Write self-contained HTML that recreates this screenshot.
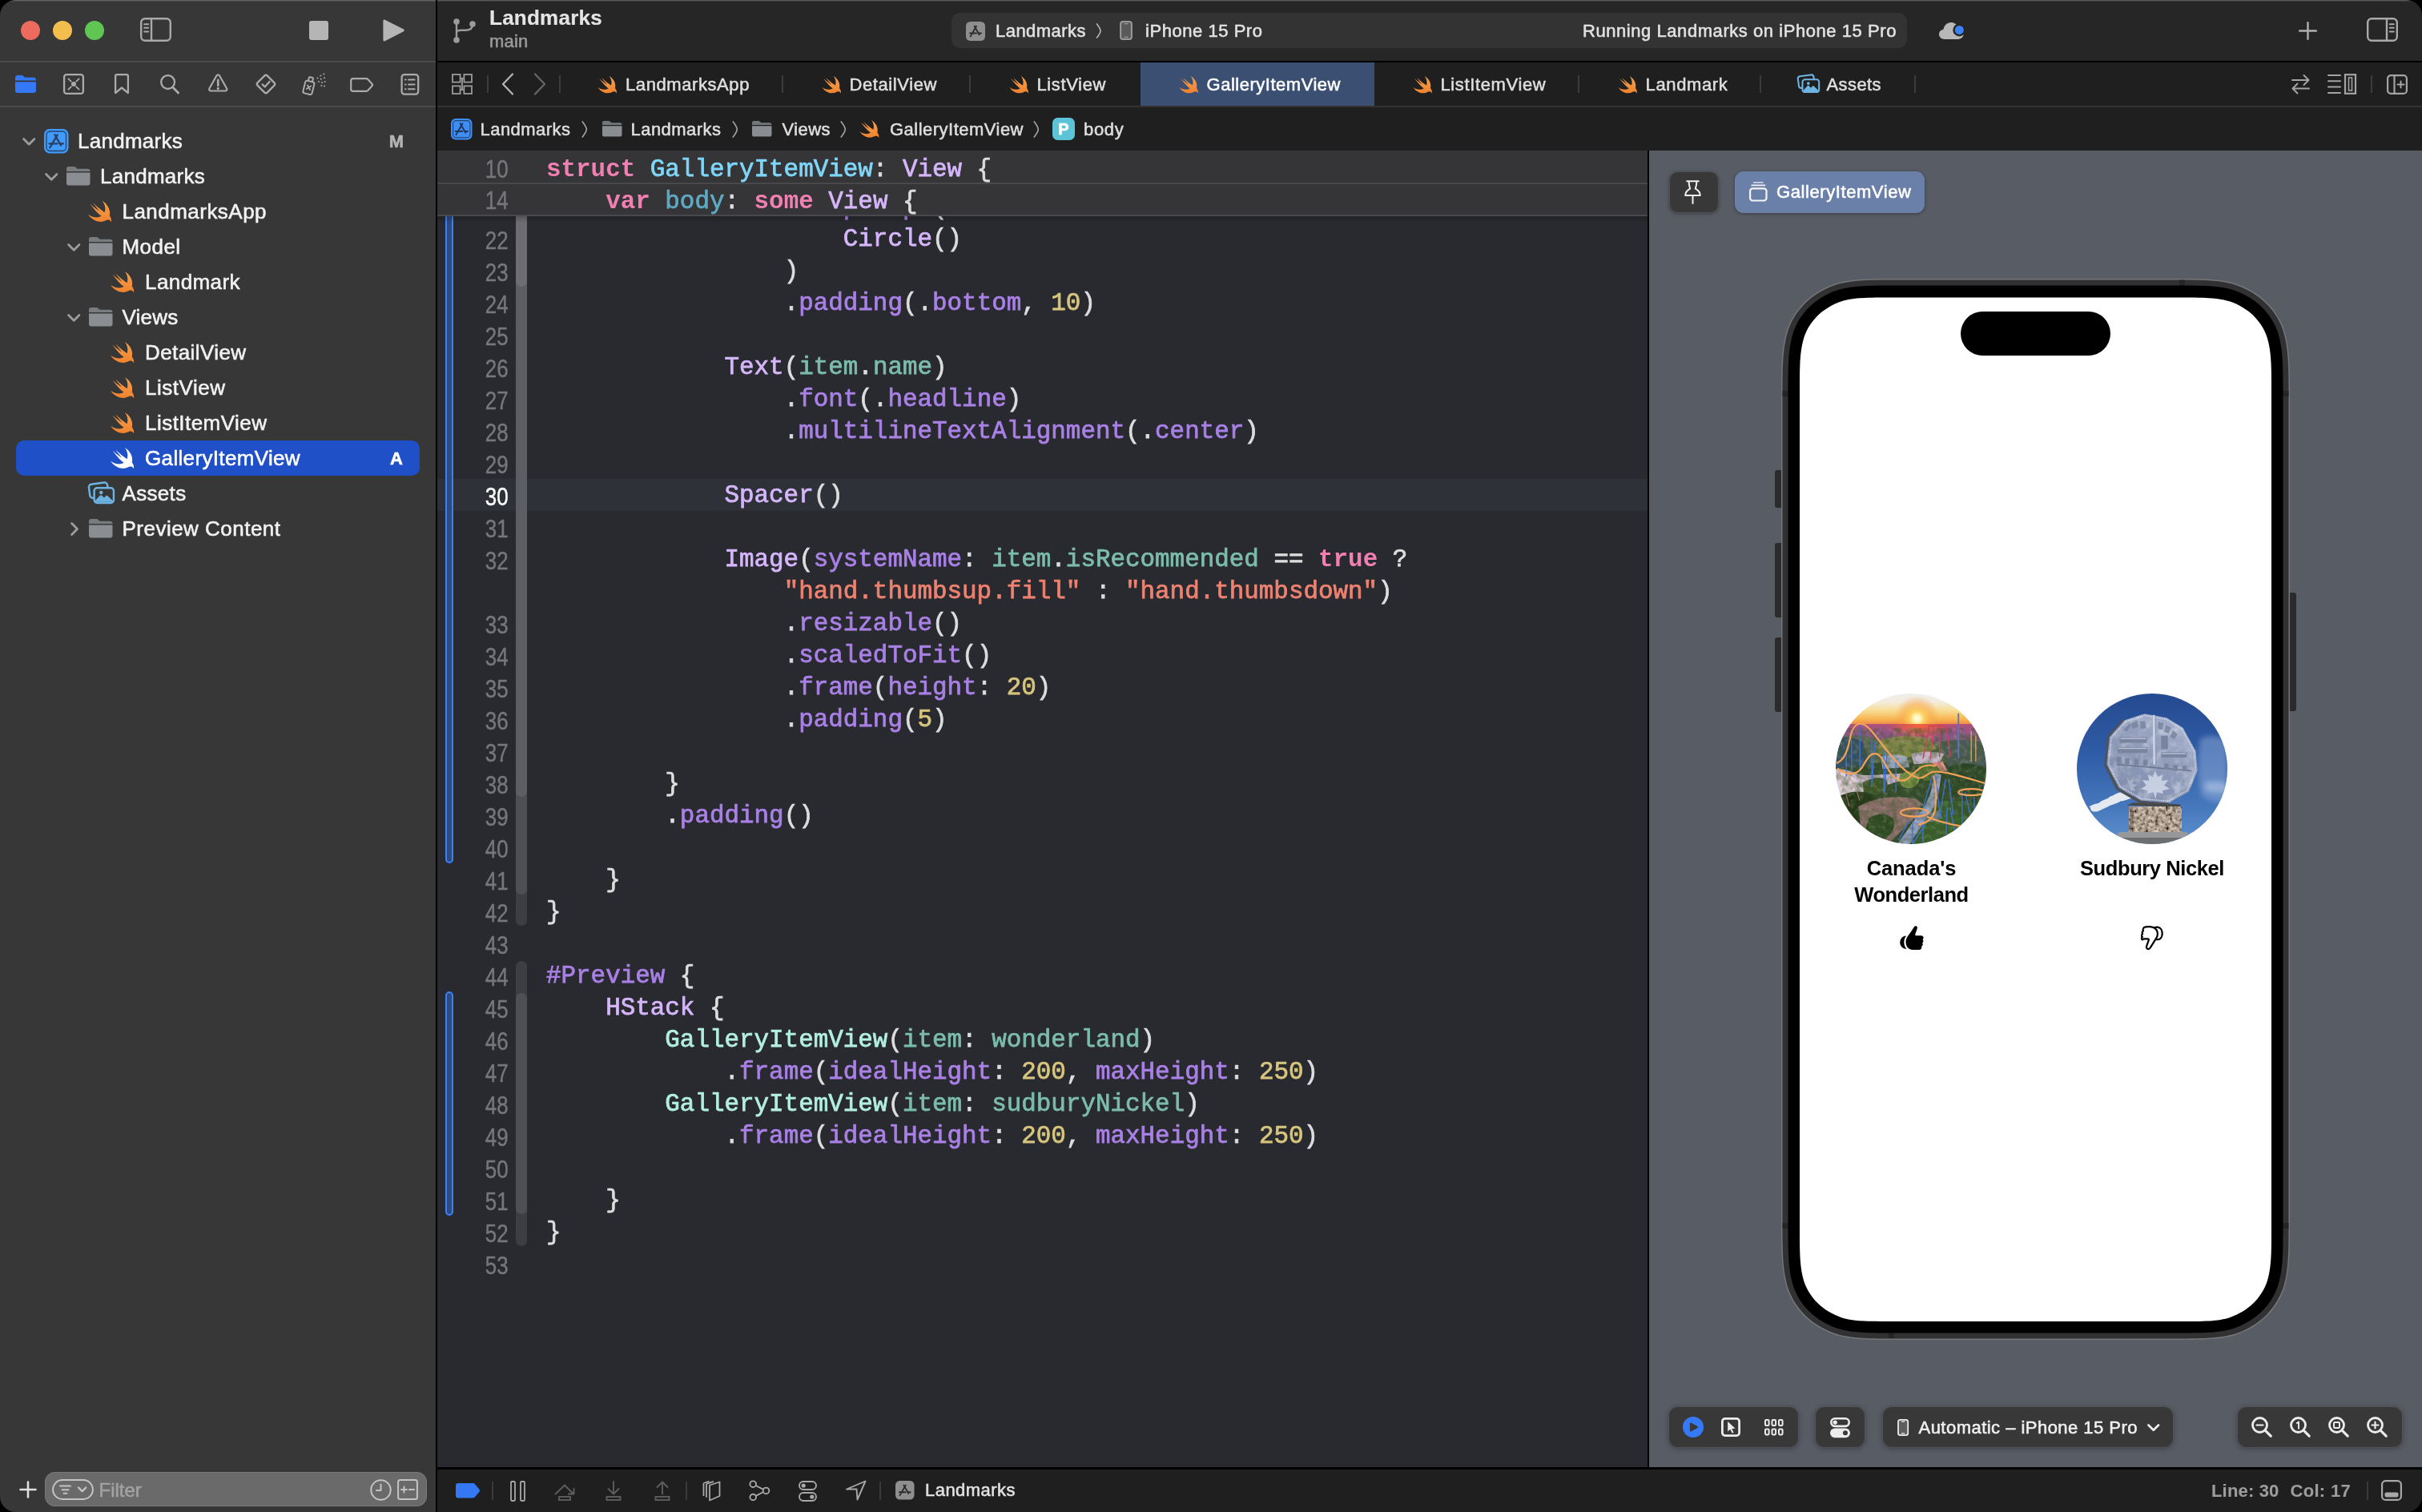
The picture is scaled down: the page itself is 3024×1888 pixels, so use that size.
<!DOCTYPE html>
<html lang="en"><head><meta charset="utf-8"><title>Landmarks — GalleryItemView.swift</title>
<style>
html,body{margin:0;padding:0;background:#000;}
body{width:3024px;height:1888px;overflow:hidden;position:relative;font-family:"Liberation Sans", sans-serif;}
#win{position:absolute;left:0;top:0;width:3024px;height:1888px;border-radius:20px;overflow:hidden;background:#1f1f1f;will-change:transform;}
#win div,#win svg,#win span.t{position:absolute;}
#win svg{overflow:visible;display:block;}
.t{white-space:pre;font-family:"Liberation Sans", sans-serif;-webkit-text-stroke:.55px currentColor;}
.cl{position:absolute;white-space:pre;font-family:"Liberation Mono", monospace;font-size:30.9px;line-height:40px;height:40px;letter-spacing:0;-webkit-text-stroke:.75px currentColor;}.ck{color:#f07fb2;font-weight:700;-webkit-text-stroke:0;}.cd{color:#7fd6f8;}.ct{color:#d5b6fb;}.cm{color:#a980e6;}.cp{color:#7cbcab;}.cP{color:#b2efdf;}.cs{color:#ee8271;}.cn{color:#d6c57d;}.cb{color:#5ea9c3;}.cx{color:#dddddd;}.ln{position:absolute;right:2389px;font-family:"Liberation Sans", sans-serif;font-size:32px;line-height:40px;height:40px;transform:scaleX(.81);-webkit-text-stroke:.45px currentColor;transform-origin:100% 50%;}</style></head>
<body>
<svg width="0" height="0" style="position:absolute"><defs><linearGradient id="swg" x1="0" y1="0" x2="0" y2="1"><stop offset="0" stop-color="#f9a04a"/><stop offset="1" stop-color="#f0832f"/></linearGradient></defs></svg>
<div id="win">
<div style="left:0px;top:0px;width:544px;height:1888px;background:#373737;"></div>
<div style="left:0px;top:0px;width:544px;height:1px;background:#646464;"></div>
<div style="left:0px;top:1px;width:544px;height:1px;background:#484848;"></div>
<div style="left:26px;top:26px;width:24px;height:24px;background:#ed6a5e;border-radius:50%;"></div>
<div style="left:66px;top:26px;width:24px;height:24px;background:#f4be4f;border-radius:50%;"></div>
<div style="left:106px;top:26px;width:24px;height:24px;background:#61c554;border-radius:50%;"></div>
<svg style="left:175px;top:22px;" width="39" height="30" viewBox="0 0 39 30" ><rect x="1.200" y="1.200" width="36.600" height="27.600" rx="5" fill="none" stroke="#a9a9a9" stroke-width="2.4"/><path d="M14 1.500v27" stroke="#a9a9a9" stroke-width="2.4"/><path d="M5.200 8.200h5M5.200 12.800h5M5.200 17.400h5" stroke="#a9a9a9" stroke-width="2" stroke-linecap="round"/></svg>
<div style="left:386px;top:26px;width:24px;height:24px;background:#b5b5b5;border-radius:3px;"></div>
<svg style="left:478px;top:23px;" width="28" height="30" viewBox="0 0 28 30" ><path d="M2.600 1.800c-1-.6-2.200.1-2.200 1.300v23.800c0 1.200 1.200 1.900 2.200 1.300l23.400-11.900c1.100-.6 1.100-2.100 0-2.700z" fill="#b5b5b5"/></svg>
<div style="left:0px;top:76px;width:544px;height:2px;background:#4a4a4a;"></div>
<div style="left:0px;top:132px;width:544px;height:2px;background:#4a4a4a;"></div>
<svg style="left:19px;top:94px;" width="26" height="22" viewBox="0 0 26 22" ><path d="M0 3.2C0 1.4 1.3 0 3 0h5.2c.8 0 1.5.3 2 .9l1 1.1c.4.5 1 .7 1.6.7H23c1.7 0 3 1.3 3 3v.8H0z" fill="#3478f6"/><path d="M0 8.2h26V19c0 1.7-1.3 3-3 3H3c-1.7 0-3-1.3-3-3z" fill="#3478f6"/></svg>
<svg style="left:79px;top:92px;" width="26" height="26" viewBox="0 0 26 26" ><rect x="1.1" y="1.1" width="23.8" height="23.8" rx="3" fill="none" stroke="#ababab" stroke-width="2.3"/><path d="M6.4 6.4l3.300 3.300M19.600 6.400l-3.300 3.300M6.400 19.600l3.300-3.300M19.600 19.600l-3.300-3.300" stroke="#ababab" stroke-width="1.900" stroke-linecap="round"/><circle cx="13" cy="13" r="3" fill="#ababab"/></svg>
<svg style="left:142px;top:92px;" width="20" height="26" viewBox="0 0 20 26" ><path d="M2.1 3.1c0-1.1.9-2 2-2h11.8c1.1 0 2 .9 2 2v21l-7.9-6.6-7.9 6.6z" fill="none" stroke="#ababab" stroke-width="2.3" stroke-linejoin="round"/></svg>
<svg style="left:200px;top:93px;" width="24" height="25" viewBox="0 0 24 25" ><circle cx="9.6" cy="9.6" r="8.4" fill="none" stroke="#ababab" stroke-width="2.3"/><path d="M15.8 16l6.8 7" stroke="#ababab" stroke-width="2.8" stroke-linecap="round"/></svg>
<svg style="left:260px;top:92px;" width="24.5" height="23.6" viewBox="0 0 26 25" ><path d="M11.2 2.4c.8-1.4 2.8-1.4 3.6 0l9.7 17.3c.8 1.4-.2 3.1-1.8 3.1H3.3c-1.6 0-2.6-1.7-1.8-3.1z" fill="none" stroke="#ababab" stroke-width="2.3" stroke-linejoin="round"/><path d="M13 8.400v7.400" stroke="#ababab" stroke-width="2.900" stroke-linecap="round"/><circle cx="13" cy="19.500" r="1.700" fill="#ababab"/></svg>
<svg style="left:318px;top:91px;" width="28" height="28" viewBox="0 0 28 28" ><rect x="5.4" y="5.4" width="17.2" height="17.2" rx="2.6" transform="rotate(45 14 14)" fill="none" stroke="#ababab" stroke-width="2.3"/><path d="M9.6 14.4l3.1 3.1 5.8-6.6" fill="none" stroke="#ababab" stroke-width="2.3" stroke-linecap="round" stroke-linejoin="round"/></svg>
<svg style="left:377px;top:91px;" width="31" height="28" viewBox="0 0 31 28" ><g transform="rotate(14 9 17)"><rect x="3" y="10.5" width="11.5" height="16" rx="2.4" fill="none" stroke="#ababab" stroke-width="2"/><path d="M6.2 10.2V6.4c0-.6.4-1 1-1h3.2c.6 0 1 .4 1 1v3.8" fill="none" stroke="#ababab" stroke-width="2"/><path d="M6.6 16l4.4 4.6M11 16l-4.4 4.6" stroke="#ababab" stroke-width="1.8" stroke-linecap="round"/></g><g fill="#ababab"><circle cx="19.5" cy="6.4" r="1"/><circle cx="23.4" cy="3.6" r="1"/><circle cx="27.4" cy="1.6" r="1"/><circle cx="23.8" cy="7.8" r="1"/><circle cx="28" cy="6.2" r="1"/><circle cx="21" cy="11" r="1"/><circle cx="25" cy="12" r="1"/><circle cx="28.6" cy="11" r="1"/><circle cx="24.4" cy="16" r="1"/><circle cx="28" cy="16.4" r="1"/></g></svg>
<svg style="left:436.5px;top:96.5px;" width="30.5" height="18" viewBox="0 0 32 19" ><path d="M4 1.2h17.4c.9 0 1.7.4 2.3 1.1l5.4 6.1c.6.6.6 1.6 0 2.2l-5.4 6.1c-.6.7-1.4 1.1-2.3 1.1H4c-1.6 0-2.8-1.300-2.8-2.800V4C1.200 2.400 2.400 1.200 4 1.200z" fill="none" stroke="#ababab" stroke-width="2.3" stroke-linejoin="round"/></svg>
<svg style="left:500px;top:92px;" width="24" height="27" viewBox="0 0 24 27" ><rect x="1.6" y="1.1" width="20.6" height="24.6" rx="3.4" fill="none" stroke="#ababab" stroke-width="2.3"/><g stroke="#ababab" stroke-width="2" stroke-linecap="round"><path d="M10 7.600h7.600M10 13.400h7.600M10 19.200h7.600"/><path d="M6 7.600h.6M6 13.400h.6M6 19.200h.6"/></g></svg>
<svg style="left:28px;top:171.5px;" width="16.5" height="9.9" viewBox="0 0 16 9.6" ><path d="M1.5 1.5L8 8l6.5-6.5" fill="none" stroke="#9c9c9c" stroke-width="2.7" stroke-linecap="round" stroke-linejoin="round"/></svg>
<svg style="left:54.5px;top:161px;" width="30.5" height="30.5" viewBox="0 0 30.500 30.500" ><rect x="0" y="0" width="30.500" height="30.500" rx="7" fill="#3f9bfd"/><rect x="3" y="3" width="24.500" height="24.500" rx="4.500" fill="none" stroke="#27426b" stroke-width="1.300"/><g fill="none" stroke="#2b3f60" stroke-width="2.300" stroke-linecap="round"><path d="M16.600 7.400L8.800 20.800"/><path d="M13.400 7.200l7.600 13.200"/><path d="M6.600 18.400h10"/><path d="M20.400 18.400h3.600"/><path d="M8 22.200l-.6 1"/></g></svg>
<span class="t" style="top:159.0px;font-size:26px;line-height:34px;color:#f2f2f2;left:97px;letter-spacing:0.264px;">Landmarks</span>
<span class="t" style="top:161.5px;font-size:22px;line-height:29px;color:#b4b4b4;left:-5px;width:1000px;text-align:center;font-weight:700;">M</span>
<svg style="left:56px;top:215.5px;" width="16.5" height="9.9" viewBox="0 0 16 9.6" ><path d="M1.5 1.5L8 8l6.5-6.5" fill="none" stroke="#9c9c9c" stroke-width="2.7" stroke-linecap="round" stroke-linejoin="round"/></svg>
<svg style="left:83px;top:208px;" width="29.5" height="23.6" viewBox="0 0 30 24" ><path d="M2.5 0h7.2c.9 0 1.6.3 2.2.9l1.3 1.3c.5.5 1.1.7 1.8.7H27c1.7 0 3 1.3 3 3V6H0V2.5C0 1.1 1.1 0 2.5 0z" fill="#8a8d91" opacity=".8"/><path d="M0 7.6h30V21c0 1.7-1.3 3-3 3H3c-1.7 0-3-1.3-3-3z" fill="#8a8d91"/></svg>
<span class="t" style="top:203.0px;font-size:26px;line-height:34px;color:#f2f2f2;left:125px;letter-spacing:0.264px;">Landmarks</span>
<svg style="left:109.5px;top:250.5px;" width="29.8" height="26.6" viewBox="2.35 3.35 18.6 16.6" ><path d="M13.543 3.41c4.114 2.47 6.545 7.162 5.549 11.131-.024.093-.05.181-.076.272l.002.001c2.062 2.538 1.5 5.258 1.236 4.745-1.072-2.086-3.066-1.568-4.088-1.043a6.803 6.803 0 0 1-.281.158l-.02.012-.002.002c-2.115 1.123-4.957 1.205-7.812-.022a12.568 12.568 0 0 1-5.64-4.838c.649.48 1.35.902 2.097 1.252 3.019 1.414 6.051 1.311 8.197-.002C9.651 12.73 7.101 9.67 5.146 7.191a10.628 10.628 0 0 1-1.005-1.384c2.34 2.142 6.038 4.83 7.365 5.576C8.69 8.408 6.208 4.743 6.324 4.86c4.436 4.47 8.528 6.996 8.528 6.996.154.085.27.154.36.213.085-.215.16-.437.224-.668.708-2.588-.09-5.548-1.893-7.992z" fill="url(#swg)"/></svg>
<span class="t" style="top:247.0px;font-size:26px;line-height:34px;color:#f2f2f2;left:152.5px;letter-spacing:0.467px;">LandmarksApp</span>
<svg style="left:83.5px;top:303.5px;" width="16.5" height="9.9" viewBox="0 0 16 9.6" ><path d="M1.5 1.5L8 8l6.5-6.5" fill="none" stroke="#9c9c9c" stroke-width="2.7" stroke-linecap="round" stroke-linejoin="round"/></svg>
<svg style="left:110.5px;top:296px;" width="29.5" height="23.6" viewBox="0 0 30 24" ><path d="M2.5 0h7.2c.9 0 1.6.3 2.2.9l1.3 1.3c.5.5 1.1.7 1.8.7H27c1.7 0 3 1.3 3 3V6H0V2.5C0 1.1 1.1 0 2.5 0z" fill="#8a8d91" opacity=".8"/><path d="M0 7.6h30V21c0 1.7-1.3 3-3 3H3c-1.7 0-3-1.3-3-3z" fill="#8a8d91"/></svg>
<span class="t" style="top:291.0px;font-size:26px;line-height:34px;color:#f2f2f2;left:152.5px;letter-spacing:0.434px;">Model</span>
<svg style="left:138px;top:338.5px;" width="29.8" height="26.6" viewBox="2.35 3.35 18.6 16.6" ><path d="M13.543 3.41c4.114 2.47 6.545 7.162 5.549 11.131-.024.093-.05.181-.076.272l.002.001c2.062 2.538 1.5 5.258 1.236 4.745-1.072-2.086-3.066-1.568-4.088-1.043a6.803 6.803 0 0 1-.281.158l-.02.012-.002.002c-2.115 1.123-4.957 1.205-7.812-.022a12.568 12.568 0 0 1-5.64-4.838c.649.48 1.35.902 2.097 1.252 3.019 1.414 6.051 1.311 8.197-.002C9.651 12.73 7.101 9.67 5.146 7.191a10.628 10.628 0 0 1-1.005-1.384c2.34 2.142 6.038 4.83 7.365 5.576C8.69 8.408 6.208 4.743 6.324 4.86c4.436 4.47 8.528 6.996 8.528 6.996.154.085.27.154.36.213.085-.215.16-.437.224-.668.708-2.588-.09-5.548-1.893-7.992z" fill="url(#swg)"/></svg>
<span class="t" style="top:335.0px;font-size:26px;line-height:34px;color:#f2f2f2;left:181px;letter-spacing:0.422px;">Landmark</span>
<svg style="left:83.5px;top:391.5px;" width="16.5" height="9.9" viewBox="0 0 16 9.6" ><path d="M1.5 1.5L8 8l6.5-6.5" fill="none" stroke="#9c9c9c" stroke-width="2.7" stroke-linecap="round" stroke-linejoin="round"/></svg>
<svg style="left:110.5px;top:384px;" width="29.5" height="23.6" viewBox="0 0 30 24" ><path d="M2.5 0h7.2c.9 0 1.6.3 2.2.9l1.3 1.3c.5.5 1.1.7 1.8.7H27c1.7 0 3 1.3 3 3V6H0V2.5C0 1.1 1.1 0 2.5 0z" fill="#8a8d91" opacity=".8"/><path d="M0 7.6h30V21c0 1.7-1.3 3-3 3H3c-1.7 0-3-1.3-3-3z" fill="#8a8d91"/></svg>
<span class="t" style="top:379.0px;font-size:26px;line-height:34px;color:#f2f2f2;left:152.5px;letter-spacing:0.222px;">Views</span>
<svg style="left:138px;top:426.5px;" width="29.8" height="26.6" viewBox="2.35 3.35 18.6 16.6" ><path d="M13.543 3.41c4.114 2.47 6.545 7.162 5.549 11.131-.024.093-.05.181-.076.272l.002.001c2.062 2.538 1.5 5.258 1.236 4.745-1.072-2.086-3.066-1.568-4.088-1.043a6.803 6.803 0 0 1-.281.158l-.02.012-.002.002c-2.115 1.123-4.957 1.205-7.812-.022a12.568 12.568 0 0 1-5.64-4.838c.649.48 1.35.902 2.097 1.252 3.019 1.414 6.051 1.311 8.197-.002C9.651 12.73 7.101 9.67 5.146 7.191a10.628 10.628 0 0 1-1.005-1.384c2.34 2.142 6.038 4.83 7.365 5.576C8.69 8.408 6.208 4.743 6.324 4.86c4.436 4.47 8.528 6.996 8.528 6.996.154.085.27.154.36.213.085-.215.16-.437.224-.668.708-2.588-.09-5.548-1.893-7.992z" fill="url(#swg)"/></svg>
<span class="t" style="top:423.0px;font-size:26px;line-height:34px;color:#f2f2f2;left:181px;letter-spacing:0.414px;">DetailView</span>
<svg style="left:138px;top:470.5px;" width="29.8" height="26.6" viewBox="2.35 3.35 18.6 16.6" ><path d="M13.543 3.41c4.114 2.47 6.545 7.162 5.549 11.131-.024.093-.05.181-.076.272l.002.001c2.062 2.538 1.5 5.258 1.236 4.745-1.072-2.086-3.066-1.568-4.088-1.043a6.803 6.803 0 0 1-.281.158l-.02.012-.002.002c-2.115 1.123-4.957 1.205-7.812-.022a12.568 12.568 0 0 1-5.64-4.838c.649.48 1.35.902 2.097 1.252 3.019 1.414 6.051 1.311 8.197-.002C9.651 12.73 7.101 9.67 5.146 7.191a10.628 10.628 0 0 1-1.005-1.384c2.34 2.142 6.038 4.83 7.365 5.576C8.69 8.408 6.208 4.743 6.324 4.86c4.436 4.47 8.528 6.996 8.528 6.996.154.085.27.154.36.213.085-.215.16-.437.224-.668.708-2.588-.09-5.548-1.893-7.992z" fill="url(#swg)"/></svg>
<span class="t" style="top:467.0px;font-size:26px;line-height:34px;color:#f2f2f2;left:181px;letter-spacing:0.518px;">ListView</span>
<svg style="left:138px;top:514.5px;" width="29.8" height="26.6" viewBox="2.35 3.35 18.6 16.6" ><path d="M13.543 3.41c4.114 2.47 6.545 7.162 5.549 11.131-.024.093-.05.181-.076.272l.002.001c2.062 2.538 1.5 5.258 1.236 4.745-1.072-2.086-3.066-1.568-4.088-1.043a6.803 6.803 0 0 1-.281.158l-.02.012-.002.002c-2.115 1.123-4.957 1.205-7.812-.022a12.568 12.568 0 0 1-5.64-4.838c.649.48 1.35.902 2.097 1.252 3.019 1.414 6.051 1.311 8.197-.002C9.651 12.73 7.101 9.67 5.146 7.191a10.628 10.628 0 0 1-1.005-1.384c2.34 2.142 6.038 4.83 7.365 5.576C8.69 8.408 6.208 4.743 6.324 4.86c4.436 4.47 8.528 6.996 8.528 6.996.154.085.27.154.36.213.085-.215.16-.437.224-.668.708-2.588-.09-5.548-1.893-7.992z" fill="url(#swg)"/></svg>
<span class="t" style="top:511.0px;font-size:26px;line-height:34px;color:#f2f2f2;left:181px;letter-spacing:0.465px;">ListItemView</span>
<div style="left:20px;top:550px;width:504px;height:44px;background:#2050c8;border-radius:10px;"></div>
<svg style="left:138px;top:558.5px;" width="29.8" height="26.6" viewBox="2.35 3.35 18.6 16.6" ><path d="M13.543 3.41c4.114 2.47 6.545 7.162 5.549 11.131-.024.093-.05.181-.076.272l.002.001c2.062 2.538 1.5 5.258 1.236 4.745-1.072-2.086-3.066-1.568-4.088-1.043a6.803 6.803 0 0 1-.281.158l-.02.012-.002.002c-2.115 1.123-4.957 1.205-7.812-.022a12.568 12.568 0 0 1-5.64-4.838c.649.48 1.35.902 2.097 1.252 3.019 1.414 6.051 1.311 8.197-.002C9.651 12.73 7.101 9.67 5.146 7.191a10.628 10.628 0 0 1-1.005-1.384c2.34 2.142 6.038 4.83 7.365 5.576C8.69 8.408 6.208 4.743 6.324 4.86c4.436 4.47 8.528 6.996 8.528 6.996.154.085.27.154.36.213.085-.215.16-.437.224-.668.708-2.588-.09-5.548-1.893-7.992z" fill="#ffffff"/></svg>
<span class="t" style="top:555.0px;font-size:26px;line-height:34px;color:#ffffff;left:181px;letter-spacing:0.346px;">GalleryItemView</span>
<span class="t" style="top:557.5px;font-size:22px;line-height:29px;color:#ffffff;left:-5px;width:1000px;text-align:center;font-weight:700;">A</span>
<svg style="left:109.5px;top:602px;" width="33.5" height="27.4" viewBox="0 0 33 27" ><rect x="1.500" y="1.500" width="23" height="17" rx="3.5" transform="rotate(-8 13 10)" fill="none" stroke="#6db3e2" stroke-width="2.4"/><rect x="7.5" y="7.2" width="24" height="18.400" rx="3.6" fill="#373737" stroke="#6db3e2" stroke-width="2.4"/><path d="M9 22.500l5.600-6c.7-.7 1.700-.7 2.400 0l2.600 2.800 2.200-2.200c.7-.7 1.700-.7 2.400 0l5.800 5.600v.4c0 .8-.6 1.400-1.400 1.400H10.400c-.8 0-1.400-.6-1.400-1.400z" fill="#6db3e2"/><circle cx="16" cy="12.800" r="2.200" fill="#6db3e2"/></svg>
<span class="t" style="top:599.0px;font-size:26px;line-height:34px;color:#f2f2f2;left:152.5px;letter-spacing:0.328px;">Assets</span>
<svg style="left:88.0px;top:651.5px;" width="10.2" height="17" viewBox="0 0 9.6 16" ><path d="M1.5 1.5L8 8l-6.5 6.5" fill="none" stroke="#9c9c9c" stroke-width="2.7" stroke-linecap="round" stroke-linejoin="round"/></svg>
<svg style="left:110.5px;top:648px;" width="29.5" height="23.6" viewBox="0 0 30 24" ><path d="M2.5 0h7.2c.9 0 1.6.3 2.2.9l1.3 1.3c.5.5 1.1.7 1.8.7H27c1.7 0 3 1.3 3 3V6H0V2.5C0 1.1 1.1 0 2.5 0z" fill="#8a8d91" opacity=".8"/><path d="M0 7.6h30V21c0 1.7-1.3 3-3 3H3c-1.7 0-3-1.3-3-3z" fill="#8a8d91"/></svg>
<span class="t" style="top:643.0px;font-size:26px;line-height:34px;color:#f2f2f2;left:152.5px;letter-spacing:0.482px;">Preview Content</span>
<svg style="left:24px;top:1849px;" width="22" height="22" viewBox="0 0 22 22" ><path d="M11 1.500v19M1.500 11h19" stroke="#e0e0e0" stroke-width="2.600" stroke-linecap="round"/></svg>
<div style="left:56px;top:1838px;width:477px;height:43px;background:#6a6a6a;border-radius:12px;border:1px solid #7a7a7a;box-sizing:border-box;"></div>
<svg style="left:65px;top:1847px;" width="52" height="26" viewBox="0 0 52 26" ><rect x="1.100" y="1.100" width="49.800" height="23.800" rx="11.900" fill="none" stroke="#c4c4c4" stroke-width="2"/><path d="M10 8.600h13M12.500 13.200h8M14.600 17.800h3.800" stroke="#c4c4c4" stroke-width="2" stroke-linecap="round"/><path d="M33 10.500l4.600 4.600 4.600-4.600" fill="none" stroke="#c4c4c4" stroke-width="2.400" stroke-linecap="round" stroke-linejoin="round"/></svg>
<span class="t" style="top:1844.5px;font-size:24px;line-height:31px;color:#a2a2a2;left:123.5px;">Filter</span>
<svg style="left:461.5px;top:1846.5px;" width="27" height="27" viewBox="0 0 27 27" ><circle cx="13.500" cy="13.500" r="12.200" fill="none" stroke="#c4c4c4" stroke-width="2"/><path d="M13.500 6.500v7.600H8" fill="none" stroke="#c4c4c4" stroke-width="2" stroke-linecap="round" stroke-linejoin="round"/></svg>
<svg style="left:496px;top:1847px;" width="26" height="26" viewBox="0 0 26 26" ><rect x="1.100" y="1.100" width="23.800" height="23.800" rx="2.500" fill="none" stroke="#c4c4c4" stroke-width="2"/><path d="M5 13h7M8.500 9.500v7M15 13h6" stroke="#c4c4c4" stroke-width="2" stroke-linecap="round"/></svg>
<div style="left:546px;top:0px;width:2478px;height:76px;background:#262626;"></div>
<div style="left:546px;top:0px;width:2478px;height:1px;background:#5a5a5a;"></div>
<div style="left:546px;top:1px;width:2478px;height:1px;background:#3a3a3a;"></div>
<div style="left:546px;top:76px;width:2478px;height:2px;background:#000000;"></div>
<svg style="left:565px;top:22px;" width="30" height="33" viewBox="0 0 30 33" ><circle cx="5" cy="5" r="3.800" fill="#9b9b9b"/><circle cx="5" cy="28" r="3.800" fill="#9b9b9b"/><circle cx="25" cy="8" r="3.800" fill="#9b9b9b"/><path d="M5 5v23M5 19.500c0-3 1.600-3.800 6-3.800h6c5 0 8-1.700 8-7.700" fill="none" stroke="#9b9b9b" stroke-width="2.400"/></svg>
<span class="t" style="top:4.8px;font-size:26px;line-height:34px;color:#e4e4e4;left:611px;font-weight:700;letter-spacing:0.252px;-webkit-text-stroke:.2px currentColor;">Landmarks</span>
<span class="t" style="top:37.0px;font-size:22px;line-height:29px;color:#9a9a9a;left:611px;letter-spacing:0.203px;">main</span>
<div style="left:1188px;top:16px;width:1193px;height:44px;background:#333333;border-radius:11px;"></div>
<svg style="left:1205.5px;top:26.5px;" width="24" height="24" viewBox="0 0 24 24" ><rect width="24" height="24" rx="5.500" fill="#8e8e8e"/><g fill="none" stroke="#2c2c2c" stroke-width="1.900" stroke-linecap="round"><path d="M13 5.800L7 16.200"/><path d="M10.600 5.600l6 10.600"/><path d="M5 14.500h8"/><path d="M16 14.500h3"/><path d="M6.200 17.600l-.5.900"/></g></svg>
<span class="t" style="top:23.5px;font-size:22px;line-height:29px;color:#e2e2e2;left:1243px;letter-spacing:0.462px;">Landmarks</span>
<svg style="left:1368px;top:28.5px;" width="8" height="19" viewBox="0 0 8 21" ><path d="M1.300 1C5 6 6.300 8.500 6.300 10.500S5 15 1.300 20" fill="none" stroke="#b4b4b4" stroke-width="1.800" stroke-linecap="round" stroke-linejoin="round"/></svg>
<svg style="left:1397.5px;top:26px;" width="16" height="24" viewBox="0 0 16 24" ><rect x="1.100" y="1.100" width="13.800" height="21.800" rx="3" fill="#5a5a5a" stroke="#9a9a9a" stroke-width="2"/><path d="M6 3.600h4M6 20.400h4" stroke="#9a9a9a" stroke-width="1.300" stroke-linecap="round"/></svg>
<span class="t" style="top:23.5px;font-size:22px;line-height:29px;color:#e2e2e2;left:1430px;letter-spacing:0.543px;">iPhone 15 Pro</span>
<span class="t" style="top:23.5px;font-size:22px;line-height:29px;color:#e2e2e2;right:656px;letter-spacing:0.558px;">Running Landmarks on iPhone 15 Pro</span>
<svg style="left:2420px;top:27px;" width="33" height="23" viewBox="0 0 33 23" ><path d="M8 22c-4 0-7-2.600-7-6.200 0-3.200 2.300-5.600 5.400-6C7.300 4.500 11.200 1 16 1c4 0 7.400 2.400 8.800 6 .4 0 .7-.1 1-.1 3.600 0 6.200 3.200 6.200 7.100 0 4.400-3 8-7.300 8z" fill="#b8b8b8"/><circle cx="26.300" cy="10.400" r="8" fill="#262626"/><circle cx="26.300" cy="10.400" r="5.500" fill="#3b82f6"/></svg>
<svg style="left:2870px;top:26.5px;" width="23" height="23" viewBox="0 0 23 23" ><path d="M11.500 1.200v20.600M1.200 11.500h20.600" stroke="#b0b0b0" stroke-width="2.400" stroke-linecap="round"/></svg>
<svg style="left:2955px;top:22px;" width="39" height="30" viewBox="0 0 39 30" ><rect x="1.200" y="1.200" width="36.600" height="27.600" rx="5" fill="none" stroke="#a9a9a9" stroke-width="2.400"/><path d="M25 1.500v27" stroke="#a9a9a9" stroke-width="2.400"/><path d="M28.800 8.200h5M28.800 12.800h5M28.800 17.400h5" stroke="#a9a9a9" stroke-width="2" stroke-linecap="round"/></svg>
<div style="left:546px;top:78px;width:2478px;height:54px;background:#1f1f1f;"></div>
<div style="left:546px;top:132px;width:2478px;height:2px;background:#333333;"></div>
<svg style="left:564px;top:92px;" width="26" height="26" viewBox="0 0 26 26" ><g fill="none" stroke="#9a9a9a" stroke-width="1.800"><rect x="1" y="1" width="9.600" height="9.600"/><rect x="15.400" y="1" width="9.600" height="9.600"/><rect x="1" y="15.400" width="9.600" height="9.600"/><rect x="15.400" y="15.400" width="9.600" height="9.600"/><path d="M10.600 5.800h4.800M13 5.800v14.400M10.600 20.200h4.800"/></g></svg>
<div style="left:608px;top:94px;width:2px;height:22px;background:#3c3c3c;"></div>
<svg style="left:626px;top:91px;" width="16" height="28" viewBox="0 0 16 28" ><path d="M14 1.500L2 14l12 12.500" fill="none" stroke="#b4b4b4" stroke-width="2.300" stroke-linecap="round" stroke-linejoin="round"/></svg>
<svg style="left:666px;top:91px;" width="16" height="28" viewBox="0 0 16 28" ><path d="M2 1.500L14 14 2 26.500" fill="none" stroke="#666666" stroke-width="2.300" stroke-linecap="round" stroke-linejoin="round"/></svg>
<div style="left:698px;top:94px;width:2px;height:22px;background:#3c3c3c;"></div>
<div style="left:1424px;top:78px;width:292px;height:54px;background:#3a4f72;"></div>
<svg style="left:745.5px;top:94.5px;" width="24.5" height="21.9" viewBox="2.35 3.35 18.6 16.6" ><path d="M13.543 3.41c4.114 2.47 6.545 7.162 5.549 11.131-.024.093-.05.181-.076.272l.002.001c2.062 2.538 1.5 5.258 1.236 4.745-1.072-2.086-3.066-1.568-4.088-1.043a6.803 6.803 0 0 1-.281.158l-.02.012-.002.002c-2.115 1.123-4.957 1.205-7.812-.022a12.568 12.568 0 0 1-5.64-4.838c.649.48 1.35.902 2.097 1.252 3.019 1.414 6.051 1.311 8.197-.002C9.651 12.73 7.101 9.67 5.146 7.191a10.628 10.628 0 0 1-1.005-1.384c2.34 2.142 6.038 4.83 7.365 5.576C8.69 8.408 6.208 4.743 6.324 4.86c4.436 4.47 8.528 6.996 8.528 6.996.154.085.27.154.36.213.085-.215.16-.437.224-.668.708-2.588-.09-5.548-1.893-7.992z" fill="url(#swg)"/></svg>
<span class="t" style="top:91.0px;font-size:22px;line-height:29px;color:#dedede;left:781px;letter-spacing:0.585px;">LandmarksApp</span>
<svg style="left:1025.5px;top:94.5px;" width="24.5" height="21.9" viewBox="2.35 3.35 18.6 16.6" ><path d="M13.543 3.41c4.114 2.47 6.545 7.162 5.549 11.131-.024.093-.05.181-.076.272l.002.001c2.062 2.538 1.5 5.258 1.236 4.745-1.072-2.086-3.066-1.568-4.088-1.043a6.803 6.803 0 0 1-.281.158l-.02.012-.002.002c-2.115 1.123-4.957 1.205-7.812-.022a12.568 12.568 0 0 1-5.64-4.838c.649.48 1.35.902 2.097 1.252 3.019 1.414 6.051 1.311 8.197-.002C9.651 12.73 7.101 9.67 5.146 7.191a10.628 10.628 0 0 1-1.005-1.384c2.34 2.142 6.038 4.83 7.365 5.576C8.69 8.408 6.208 4.743 6.324 4.86c4.436 4.47 8.528 6.996 8.528 6.996.154.085.27.154.36.213.085-.215.16-.437.224-.668.708-2.588-.09-5.548-1.893-7.992z" fill="url(#swg)"/></svg>
<span class="t" style="top:91.0px;font-size:22px;line-height:29px;color:#dedede;left:1060.5px;letter-spacing:0.595px;">DetailView</span>
<svg style="left:1259.5px;top:94.5px;" width="24.5" height="21.9" viewBox="2.35 3.35 18.6 16.6" ><path d="M13.543 3.41c4.114 2.47 6.545 7.162 5.549 11.131-.024.093-.05.181-.076.272l.002.001c2.062 2.538 1.5 5.258 1.236 4.745-1.072-2.086-3.066-1.568-4.088-1.043a6.803 6.803 0 0 1-.281.158l-.02.012-.002.002c-2.115 1.123-4.957 1.205-7.812-.022a12.568 12.568 0 0 1-5.64-4.838c.649.48 1.35.902 2.097 1.252 3.019 1.414 6.051 1.311 8.197-.002C9.651 12.73 7.101 9.67 5.146 7.191a10.628 10.628 0 0 1-1.005-1.384c2.34 2.142 6.038 4.83 7.365 5.576C8.69 8.408 6.208 4.743 6.324 4.86c4.436 4.47 8.528 6.996 8.528 6.996.154.085.27.154.36.213.085-.215.16-.437.224-.668.708-2.588-.09-5.548-1.893-7.992z" fill="url(#swg)"/></svg>
<span class="t" style="top:91.0px;font-size:22px;line-height:29px;color:#dedede;left:1294.5px;letter-spacing:0.621px;">ListView</span>
<svg style="left:1471.5px;top:94.5px;" width="24.5" height="21.9" viewBox="2.35 3.35 18.6 16.6" ><path d="M13.543 3.41c4.114 2.47 6.545 7.162 5.549 11.131-.024.093-.05.181-.076.272l.002.001c2.062 2.538 1.5 5.258 1.236 4.745-1.072-2.086-3.066-1.568-4.088-1.043a6.803 6.803 0 0 1-.281.158l-.02.012-.002.002c-2.115 1.123-4.957 1.205-7.812-.022a12.568 12.568 0 0 1-5.64-4.838c.649.48 1.35.902 2.097 1.252 3.019 1.414 6.051 1.311 8.197-.002C9.651 12.73 7.101 9.67 5.146 7.191a10.628 10.628 0 0 1-1.005-1.384c2.34 2.142 6.038 4.83 7.365 5.576C8.69 8.408 6.208 4.743 6.324 4.86c4.436 4.47 8.528 6.996 8.528 6.996.154.085.27.154.36.213.085-.215.16-.437.224-.668.708-2.588-.09-5.548-1.893-7.992z" fill="url(#swg)"/></svg>
<span class="t" style="top:91.0px;font-size:22px;line-height:29px;color:#ffffff;left:1506.5px;letter-spacing:0.516px;">GalleryItemView</span>
<svg style="left:1763.5px;top:94.5px;" width="24.5" height="21.9" viewBox="2.35 3.35 18.6 16.6" ><path d="M13.543 3.41c4.114 2.47 6.545 7.162 5.549 11.131-.024.093-.05.181-.076.272l.002.001c2.062 2.538 1.5 5.258 1.236 4.745-1.072-2.086-3.066-1.568-4.088-1.043a6.803 6.803 0 0 1-.281.158l-.02.012-.002.002c-2.115 1.123-4.957 1.205-7.812-.022a12.568 12.568 0 0 1-5.64-4.838c.649.48 1.35.902 2.097 1.252 3.019 1.414 6.051 1.311 8.197-.002C9.651 12.73 7.101 9.67 5.146 7.191a10.628 10.628 0 0 1-1.005-1.384c2.34 2.142 6.038 4.83 7.365 5.576C8.69 8.408 6.208 4.743 6.324 4.86c4.436 4.47 8.528 6.996 8.528 6.996.154.085.27.154.36.213.085-.215.16-.437.224-.668.708-2.588-.09-5.548-1.893-7.992z" fill="url(#swg)"/></svg>
<span class="t" style="top:91.0px;font-size:22px;line-height:29px;color:#dedede;left:1798.5px;letter-spacing:0.624px;">ListItemView</span>
<svg style="left:2019.5px;top:94.5px;" width="24.5" height="21.9" viewBox="2.35 3.35 18.6 16.6" ><path d="M13.543 3.41c4.114 2.47 6.545 7.162 5.549 11.131-.024.093-.05.181-.076.272l.002.001c2.062 2.538 1.5 5.258 1.236 4.745-1.072-2.086-3.066-1.568-4.088-1.043a6.803 6.803 0 0 1-.281.158l-.02.012-.002.002c-2.115 1.123-4.957 1.205-7.812-.022a12.568 12.568 0 0 1-5.64-4.838c.649.48 1.35.902 2.097 1.252 3.019 1.414 6.051 1.311 8.197-.002C9.651 12.73 7.101 9.67 5.146 7.191a10.628 10.628 0 0 1-1.005-1.384c2.34 2.142 6.038 4.83 7.365 5.576C8.69 8.408 6.208 4.743 6.324 4.86c4.436 4.47 8.528 6.996 8.528 6.996.154.085.27.154.36.213.085-.215.16-.437.224-.668.708-2.588-.09-5.548-1.893-7.992z" fill="url(#swg)"/></svg>
<span class="t" style="top:91.0px;font-size:22px;line-height:29px;color:#dedede;left:2054.5px;letter-spacing:0.645px;">Landmark</span>
<svg style="left:2243.5px;top:93px;" width="28.5" height="23.3" viewBox="0 0 33 27" ><rect x="1.500" y="1.500" width="23" height="17" rx="3.5" transform="rotate(-8 13 10)" fill="none" stroke="#6db3e2" stroke-width="2.4"/><rect x="7.5" y="7.2" width="24" height="18.400" rx="3.6" fill="#1f1f1f" stroke="#6db3e2" stroke-width="2.4"/><path d="M9 22.500l5.600-6c.7-.7 1.700-.7 2.400 0l2.600 2.800 2.200-2.200c.7-.7 1.700-.7 2.400 0l5.800 5.600v.4c0 .8-.6 1.400-1.400 1.400H10.400c-.8 0-1.400-.6-1.400-1.400z" fill="#6db3e2"/><circle cx="16" cy="12.800" r="2.200" fill="#6db3e2"/></svg>
<span class="t" style="top:91.0px;font-size:22px;line-height:29px;color:#dedede;left:2280.5px;letter-spacing:0.411px;">Assets</span>
<div style="left:976px;top:94px;width:2px;height:22px;background:#3c3c3c;"></div>
<div style="left:1210px;top:94px;width:2px;height:22px;background:#3c3c3c;"></div>
<div style="left:1970px;top:94px;width:2px;height:22px;background:#3c3c3c;"></div>
<div style="left:2196.5px;top:94px;width:2px;height:22px;background:#3c3c3c;"></div>
<div style="left:2390px;top:94px;width:2px;height:22px;background:#3c3c3c;"></div>
<svg style="left:2860px;top:92px;" width="25" height="26" viewBox="0 0 25 26" ><g fill="none" stroke="#a4a4a4" stroke-width="2" stroke-linecap="round" stroke-linejoin="round"><path d="M2 8h20.500M16.500 2l6 6-6 6"/><path d="M23 18.500H2.500M8.500 12.500l-6 6 6 6"/></g></svg>
<svg style="left:2906px;top:92px;" width="36" height="26" viewBox="0 0 36 26" ><g fill="none" stroke="#a4a4a4" stroke-width="2" stroke-linecap="round"><path d="M1 2h15M1 9.300h15M1 16.600h15M1 24h15"/></g><rect x="22" y="1.200" width="13" height="23.600" fill="none" stroke="#a4a4a4" stroke-width="2.200"/><rect x="26.500" y="5" width="4" height="16" fill="none" stroke="#a4a4a4" stroke-width="1.600"/></svg>
<div style="left:2960px;top:94px;width:2px;height:22px;background:#3c3c3c;"></div>
<svg style="left:2980px;top:93px;" width="26" height="25" viewBox="0 0 26 25" ><rect x="1.100" y="1.100" width="23.800" height="22.800" rx="4" fill="none" stroke="#a4a4a4" stroke-width="2.200"/><path d="M9.500 1.500v22" stroke="#a4a4a4" stroke-width="2.200"/><path d="M13.500 12.500h8M17.500 8.500v8" stroke="#a4a4a4" stroke-width="2" stroke-linecap="round"/></svg>
<div style="left:546px;top:134px;width:2478px;height:54px;background:#1f1f1f;"></div>
<svg style="left:562.5px;top:147.5px;" width="26.5" height="26.5" viewBox="0 0 30.500 30.500" ><rect x="0" y="0" width="30.500" height="30.500" rx="7" fill="#3f8ef5"/><rect x="3" y="3" width="24.500" height="24.500" rx="4.500" fill="none" stroke="#27426b" stroke-width="1.300"/><g fill="none" stroke="#22375c" stroke-width="2.300" stroke-linecap="round"><path d="M16.600 7.400L8.800 20.800"/><path d="M13.400 7.200l7.600 13.200"/><path d="M6.600 18.400h10"/><path d="M20.400 18.400h3.600"/><path d="M8 22.200l-.6 1"/></g></svg>
<span class="t" style="top:146.5px;font-size:22px;line-height:29px;color:#dedede;left:599.5px;letter-spacing:0.462px;">Landmarks</span>
<svg style="left:726px;top:150.5px;" width="8" height="21" viewBox="0 0 8 21" ><path d="M1.300 1C5 6 6.300 8.500 6.300 10.500S5 15 1.300 20" fill="none" stroke="#a0a0a0" stroke-width="1.700" stroke-linecap="round" stroke-linejoin="round"/></svg>
<svg style="left:751.5px;top:150.5px;" width="24.5" height="19.6" viewBox="0 0 30 24" ><path d="M2.5 0h7.2c.9 0 1.6.3 2.2.9l1.3 1.3c.5.5 1.1.7 1.8.7H27c1.7 0 3 1.3 3 3V6H0V2.5C0 1.1 1.1 0 2.5 0z" fill="#8a8d91" opacity=".8"/><path d="M0 7.6h30V21c0 1.7-1.3 3-3 3H3c-1.7 0-3-1.3-3-3z" fill="#8a8d91"/></svg>
<span class="t" style="top:146.5px;font-size:22px;line-height:29px;color:#dedede;left:787.5px;letter-spacing:0.462px;">Landmarks</span>
<svg style="left:914px;top:150.5px;" width="8" height="21" viewBox="0 0 8 21" ><path d="M1.300 1C5 6 6.300 8.500 6.300 10.500S5 15 1.300 20" fill="none" stroke="#a0a0a0" stroke-width="1.700" stroke-linecap="round" stroke-linejoin="round"/></svg>
<svg style="left:939px;top:150.5px;" width="24.5" height="19.6" viewBox="0 0 30 24" ><path d="M2.5 0h7.2c.9 0 1.6.3 2.2.9l1.3 1.3c.5.5 1.1.7 1.8.7H27c1.7 0 3 1.3 3 3V6H0V2.5C0 1.1 1.1 0 2.5 0z" fill="#8a8d91" opacity=".8"/><path d="M0 7.6h30V21c0 1.7-1.3 3-3 3H3c-1.7 0-3-1.3-3-3z" fill="#8a8d91"/></svg>
<span class="t" style="top:146.5px;font-size:22px;line-height:29px;color:#dedede;left:976.5px;letter-spacing:0.441px;">Views</span>
<svg style="left:1049px;top:150.5px;" width="8" height="21" viewBox="0 0 8 21" ><path d="M1.300 1C5 6 6.300 8.500 6.300 10.500S5 15 1.300 20" fill="none" stroke="#a0a0a0" stroke-width="1.700" stroke-linecap="round" stroke-linejoin="round"/></svg>
<svg style="left:1073px;top:150px;" width="25" height="22.3" viewBox="2.35 3.35 18.6 16.6" ><path d="M13.543 3.41c4.114 2.47 6.545 7.162 5.549 11.131-.024.093-.05.181-.076.272l.002.001c2.062 2.538 1.5 5.258 1.236 4.745-1.072-2.086-3.066-1.568-4.088-1.043a6.803 6.803 0 0 1-.281.158l-.02.012-.002.002c-2.115 1.123-4.957 1.205-7.812-.022a12.568 12.568 0 0 1-5.64-4.838c.649.48 1.35.902 2.097 1.252 3.019 1.414 6.051 1.311 8.197-.002C9.651 12.73 7.101 9.67 5.146 7.191a10.628 10.628 0 0 1-1.005-1.384c2.34 2.142 6.038 4.83 7.365 5.576C8.69 8.408 6.208 4.743 6.324 4.86c4.436 4.47 8.528 6.996 8.528 6.996.154.085.27.154.36.213.085-.215.16-.437.224-.668.708-2.588-.09-5.548-1.893-7.992z" fill="url(#swg)"/></svg>
<span class="t" style="top:146.5px;font-size:22px;line-height:29px;color:#dedede;left:1111px;letter-spacing:0.482px;">GalleryItemView</span>
<svg style="left:1290px;top:150.5px;" width="8" height="21" viewBox="0 0 8 21" ><path d="M1.300 1C5 6 6.300 8.500 6.300 10.500S5 15 1.300 20" fill="none" stroke="#a0a0a0" stroke-width="1.700" stroke-linecap="round" stroke-linejoin="round"/></svg>
<div style="left:1314px;top:147px;width:28px;height:28px;background:#5cc4d6;border-radius:6.500px;"></div>
<span class="t" style="top:148.0px;font-size:20px;line-height:26px;color:#ffffff;left:828px;width:1000px;text-align:center;font-weight:700;">P</span>
<span class="t" style="top:146.5px;font-size:22px;line-height:29px;color:#dedede;left:1353px;letter-spacing:0.695px;">body</span>
<div style="left:546px;top:188px;width:1511px;height:1644px;background:#292a2f;"></div>
<div style="left:546px;top:598px;width:1511px;height:40px;background:#2f3138;"></div>
<div style="left:644px;top:270px;width:14px;height:886px;background:#3d3e43;border-radius:0 0 7px 7px;"></div>
<div style="left:644px;top:270px;width:14px;height:847px;background:#4e4f54;border-radius:0 0 7px 7px;"></div>
<div style="left:644px;top:270px;width:14px;height:725px;background:#5d5e63;border-radius:0 0 7px 7px;"></div>
<div style="left:644px;top:270px;width:14px;height:88px;background:#6d6d71;border-radius:0 0 7px 7px;"></div>
<div style="left:644px;top:1200px;width:14px;height:355.5px;background:#3d3e43;border-radius:7px;"></div>
<div style="left:644px;top:1240px;width:14px;height:276px;background:#4e4f54;border-radius:7px;"></div>
<div style="left:556px;top:262px;width:10px;height:816px;background:#2e4a82;border:2px solid #3b82f7;box-sizing:border-box;border-radius:0 0 5px 5px;"></div>
<div style="left:556px;top:1238px;width:10px;height:280px;background:#2e4a82;border:2px solid #3b82f7;box-sizing:border-box;border-radius:5px;"></div>
<div class="cl" style="left:978.64px;top:239.4px"><span class="cx">.</span><span class="cm">clipShape</span><span class="cx">(</span></div>
<div class="cl" style="left:1052.80px;top:279.4px"><span class="ct">Circle</span><span class="cx">()</span></div>
<div class="cl" style="left:978.64px;top:319.4px"><span class="cx">)</span></div>
<div class="cl" style="left:978.64px;top:359.4px"><span class="cx">.</span><span class="cm">padding</span><span class="cx">(.</span><span class="cm">bottom</span><span class="cx">, </span><span class="cn">10</span><span class="cx">)</span></div>
<div class="cl" style="left:904.48px;top:439.4px"><span class="ct">Text</span><span class="cx">(</span><span class="cp">item</span><span class="cx">.</span><span class="cp">name</span><span class="cx">)</span></div>
<div class="cl" style="left:978.64px;top:479.4px"><span class="cx">.</span><span class="cm">font</span><span class="cx">(.</span><span class="cm">headline</span><span class="cx">)</span></div>
<div class="cl" style="left:978.64px;top:519.4px"><span class="cx">.</span><span class="cm">multilineTextAlignment</span><span class="cx">(.</span><span class="cm">center</span><span class="cx">)</span></div>
<div class="cl" style="left:904.48px;top:599.4px"><span class="ct">Spacer</span><span class="cx">()</span></div>
<div class="cl" style="left:904.48px;top:679.4px"><span class="ct">Image</span><span class="cx">(</span><span class="cm">systemName</span><span class="cx">: </span><span class="cp">item</span><span class="cx">.</span><span class="cp">isRecommended</span><span class="cx"> == </span><span class="ck">true</span><span class="cx"> ?</span></div>
<div class="cl" style="left:978.64px;top:719.4px"><span class="cs">&quot;hand.thumbsup.fill&quot;</span><span class="cx"> : </span><span class="cs">&quot;hand.thumbsdown&quot;</span><span class="cx">)</span></div>
<div class="cl" style="left:978.64px;top:759.4px"><span class="cx">.</span><span class="cm">resizable</span><span class="cx">()</span></div>
<div class="cl" style="left:978.64px;top:799.4px"><span class="cx">.</span><span class="cm">scaledToFit</span><span class="cx">()</span></div>
<div class="cl" style="left:978.64px;top:839.4px"><span class="cx">.</span><span class="cm">frame</span><span class="cx">(</span><span class="cm">height</span><span class="cx">: </span><span class="cn">20</span><span class="cx">)</span></div>
<div class="cl" style="left:978.64px;top:879.4px"><span class="cx">.</span><span class="cm">padding</span><span class="cx">(</span><span class="cn">5</span><span class="cx">)</span></div>
<div class="cl" style="left:830.32px;top:959.4px"><span class="cx">}</span></div>
<div class="cl" style="left:830.32px;top:999.4px"><span class="cx">.</span><span class="cm">padding</span><span class="cx">()</span></div>
<div class="cl" style="left:756.16px;top:1079.4px"><span class="cx">}</span></div>
<div class="cl" style="left:682.00px;top:1119.4px"><span class="cx">}</span></div>
<div class="cl" style="left:682.00px;top:1199.4px"><span class="cm">#Preview</span><span class="cx"> {</span></div>
<div class="cl" style="left:756.16px;top:1239.4px"><span class="ct">HStack</span><span class="cx"> {</span></div>
<div class="cl" style="left:830.32px;top:1279.4px"><span class="cP">GalleryItemView</span><span class="cx">(</span><span class="cp">item</span><span class="cx">: </span><span class="cp">wonderland</span><span class="cx">)</span></div>
<div class="cl" style="left:904.48px;top:1319.4px"><span class="cx">.</span><span class="cm">frame</span><span class="cx">(</span><span class="cm">idealHeight</span><span class="cx">: </span><span class="cn">200</span><span class="cx">, </span><span class="cm">maxHeight</span><span class="cx">: </span><span class="cn">250</span><span class="cx">)</span></div>
<div class="cl" style="left:830.32px;top:1359.4px"><span class="cP">GalleryItemView</span><span class="cx">(</span><span class="cp">item</span><span class="cx">: </span><span class="cp">sudburyNickel</span><span class="cx">)</span></div>
<div class="cl" style="left:904.48px;top:1399.4px"><span class="cx">.</span><span class="cm">frame</span><span class="cx">(</span><span class="cm">idealHeight</span><span class="cx">: </span><span class="cn">200</span><span class="cx">, </span><span class="cm">maxHeight</span><span class="cx">: </span><span class="cn">250</span><span class="cx">)</span></div>
<div class="cl" style="left:756.16px;top:1479.4px"><span class="cx">}</span></div>
<div class="cl" style="left:682.00px;top:1519.4px"><span class="cx">}</span></div>
<span class="ln" style="top:280.1px;color:#76767b">22</span>
<span class="ln" style="top:320.1px;color:#76767b">23</span>
<span class="ln" style="top:360.1px;color:#76767b">24</span>
<span class="ln" style="top:400.1px;color:#76767b">25</span>
<span class="ln" style="top:440.1px;color:#76767b">26</span>
<span class="ln" style="top:480.1px;color:#76767b">27</span>
<span class="ln" style="top:520.1px;color:#76767b">28</span>
<span class="ln" style="top:560.1px;color:#76767b">29</span>
<span class="ln" style="top:600.1px;color:#ffffff">30</span>
<span class="ln" style="top:640.1px;color:#76767b">31</span>
<span class="ln" style="top:680.1px;color:#76767b">32</span>
<span class="ln" style="top:760.1px;color:#76767b">33</span>
<span class="ln" style="top:800.1px;color:#76767b">34</span>
<span class="ln" style="top:840.1px;color:#76767b">35</span>
<span class="ln" style="top:880.1px;color:#76767b">36</span>
<span class="ln" style="top:920.1px;color:#76767b">37</span>
<span class="ln" style="top:960.1px;color:#76767b">38</span>
<span class="ln" style="top:1000.1px;color:#76767b">39</span>
<span class="ln" style="top:1040.1px;color:#76767b">40</span>
<span class="ln" style="top:1080.1px;color:#76767b">41</span>
<span class="ln" style="top:1120.1px;color:#76767b">42</span>
<span class="ln" style="top:1160.1px;color:#76767b">43</span>
<span class="ln" style="top:1200.1px;color:#76767b">44</span>
<span class="ln" style="top:1240.1px;color:#76767b">45</span>
<span class="ln" style="top:1280.1px;color:#76767b">46</span>
<span class="ln" style="top:1320.1px;color:#76767b">47</span>
<span class="ln" style="top:1360.1px;color:#76767b">48</span>
<span class="ln" style="top:1400.1px;color:#76767b">49</span>
<span class="ln" style="top:1440.1px;color:#76767b">50</span>
<span class="ln" style="top:1480.1px;color:#76767b">51</span>
<span class="ln" style="top:1520.1px;color:#76767b">52</span>
<span class="ln" style="top:1560.1px;color:#76767b">53</span>
<div style="left:546px;top:188px;width:1511px;height:82px;background:#353537;"></div>
<div style="left:546px;top:228px;width:1511px;height:2px;background:#49494d;"></div>
<div style="left:546px;top:268px;width:1511px;height:2px;background:#49494d;"></div>
<div style="left:546px;top:270px;width:1511px;height:8px;background:linear-gradient(rgba(0,0,0,.22),rgba(0,0,0,0));"></div>
<div class="cl" style="left:682.00px;top:192.3px"><span class="ck">struct</span><span class="cx"> </span><span class="cd">GalleryItemView</span><span class="cx">: </span><span class="ct">View</span><span class="cx"> {</span></div>
<div class="cl" style="left:756.16px;top:232.3px"><span class="ck">var</span><span class="cx"> </span><span class="cb">body</span><span class="cx">: </span><span class="ck">some</span><span class="cx"> </span><span class="ct">View</span><span class="cx"> {</span></div>
<span class="ln" style="top:191.3px;color:#76767b">10</span>
<span class="ln" style="top:230.1px;color:#76767b">14</span>
<div style="left:2057px;top:188px;width:2px;height:1644px;background:#000000;"></div>
<div style="left:2059px;top:188px;width:965px;height:1644px;background:#585c65;"></div>
<div style="left:2083.5px;top:214px;width:62px;height:51.5px;background:#383838;border-radius:11px;border:1px solid #505257;box-sizing:border-box;box-shadow:0 1px 4px rgba(0,0,0,.35);"></div>
<svg style="left:2103.4px;top:225.3px;" width="21" height="30" viewBox="0 0 21 30" ><g fill="none" stroke="#f0f0f0" stroke-width="2" stroke-linecap="round" stroke-linejoin="round"><path d="M3.200 1.200h14.600M5.600 1.200c0 4 .8 7 1.600 9.400C3.600 12.400 1.400 15.200 1.200 19h18.600c-.2-3.800-2.400-6.600-6-8.400.8-2.400 1.600-5.400 1.600-9.400"/><path d="M10.500 19v10"/></g></svg>
<div style="left:2166px;top:214px;width:237px;height:51.5px;background:#6b80a8;border-radius:11px;box-shadow:0 1px 4px rgba(0,0,0,.35);"></div>
<svg style="left:2183.5px;top:226.6px;" width="22.6" height="24.6" viewBox="0 0 22.600 24.600" ><g fill="none" stroke="#f4f4f4" stroke-linecap="round"><path d="M5.500 .900h11.600" stroke-width="1.300"/><path d="M3.200 4.400h16.200" stroke-width="1.700"/><rect x="1.100" y="8.300" width="20.400" height="15.200" rx="3.200" stroke-width="2.200"/></g></svg>
<span class="t" style="top:225.0px;font-size:22px;line-height:29px;color:#ffffff;left:2218px;letter-spacing:0.582px;">GalleryItemView</span>
<div style="left:2216px;top:587px;width:9px;height:47px;background:#2b2b2d;border-radius:3px 0 0 3px;"></div>
<div style="left:2216px;top:678px;width:9px;height:93px;background:#2b2b2d;border-radius:3px 0 0 3px;"></div>
<div style="left:2216px;top:796px;width:9px;height:93px;background:#2b2b2d;border-radius:3px 0 0 3px;"></div>
<div style="left:2858px;top:740px;width:9px;height:148px;background:#2b2b2d;border-radius:0 3px 3px 0;"></div>
<svg style="left:2224px;top:348px;" width="635" height="1325" viewBox="0 0 635 1325" ><path d="M152.10 0.00L482.90 0.00C526.69 0.00 548.59 0.00 568.34 6.52C597.90 16.82 618.18 37.10 627.55 62.83C635.00 86.41 635.00 108.31 635.00 152.10L635.00 1172.90C635.00 1216.69 635.00 1238.59 627.55 1262.17C618.18 1287.90 597.90 1308.18 568.34 1318.48C548.59 1325.00 526.69 1325.00 482.90 1325.00L152.10 1325.00C108.31 1325.00 86.41 1325.00 66.66 1318.48C37.10 1308.18 16.82 1287.90 7.45 1262.17C0.00 1238.59 0.00 1216.69 0.00 1172.90L0.00 152.10C0.00 108.31 0.00 86.41 7.45 62.83C16.82 37.10 37.10 16.82 66.66 6.52C86.41 0.00 108.31 0.00 152.10 0.00Z" fill="#747678"/><path d="M151.31 1.50L483.69 1.50C526.83 1.50 548.40 1.50 567.85 7.92C596.96 18.07 616.93 38.04 626.16 63.39C633.50 86.60 633.50 108.17 633.50 151.31L633.50 1173.69C633.50 1216.83 633.50 1238.40 626.16 1261.61C616.93 1286.96 596.96 1306.93 567.85 1317.08C548.40 1323.50 526.83 1323.50 483.69 1323.50L151.31 1323.50C108.17 1323.50 86.60 1323.50 67.15 1317.08C38.04 1306.93 18.07 1286.96 8.84 1261.61C1.50 1238.40 1.50 1216.83 1.50 1173.69L1.50 151.31C1.50 108.17 1.50 86.60 8.84 63.39C18.07 38.04 38.04 18.07 67.15 7.92C86.60 1.50 108.17 1.50 151.31 1.50Z" fill="#313133"/><rect x="497" y="1.5" width="7" height="8" fill="#252527"/><rect x="134" y="1315" width="7" height="8" fill="#252527"/><rect x="1.5" y="140" width="8" height="7" fill="#252527"/><rect x="625.5" y="140" width="8" height="7" fill="#252527"/><rect x="1.5" y="1179" width="8" height="7" fill="#252527"/><rect x="625.5" y="1179" width="8" height="7" fill="#252527"/><path d="M147.61 8.50L487.39 8.50C527.45 8.50 547.47 8.50 565.54 14.46C592.57 23.88 611.12 42.43 619.68 65.97C626.50 87.53 626.50 107.55 626.50 147.61L626.50 1177.39C626.50 1217.45 626.50 1237.47 619.68 1259.03C611.12 1282.57 592.57 1301.12 565.54 1310.54C547.47 1316.50 527.45 1316.50 487.39 1316.50L147.61 1316.50C107.55 1316.50 87.53 1316.50 69.46 1310.54C42.43 1301.12 23.88 1282.57 15.32 1259.03C8.50 1237.47 8.50 1217.45 8.50 1177.39L8.50 147.61C8.50 107.55 8.50 87.53 15.32 65.97C23.88 42.43 42.43 23.88 69.46 14.46C87.53 8.50 107.55 8.50 147.61 8.50Z" fill="#000000"/><path d="M140.71 23.50L494.29 23.50C528.19 23.50 545.13 23.50 560.42 28.54C583.29 36.52 598.98 52.21 606.23 72.13C612.00 90.37 612.00 107.31 612.00 141.21L612.00 1184.29C612.00 1218.19 612.00 1235.13 606.23 1253.37C598.98 1273.29 583.29 1288.98 560.42 1296.96C545.13 1302.00 528.19 1302.00 494.29 1302.00L140.71 1302.00C106.81 1302.00 89.87 1302.00 74.58 1296.96C51.71 1288.98 36.02 1273.29 28.77 1253.37C23.00 1235.13 23.00 1218.19 23.00 1184.29L23.00 141.21C23.00 107.31 23.00 90.37 28.77 72.13C36.02 52.21 51.71 36.52 74.58 28.54C89.87 23.50 106.81 23.50 140.71 23.50Z" fill="#ffffff"/></svg>
<div style="left:2448px;top:389px;width:187px;height:55px;background:#000000;border-radius:27.500px;"></div>
<svg style="left:2292.3px;top:865.6px;" width="188" height="188" viewBox="0 0 200 200" >
<defs>
<clipPath id="cpA"><circle cx="100" cy="100" r="100"/></clipPath>
<filter id="blA" x="-5%" y="-5%" width="110%" height="110%"><feGaussianBlur stdDeviation="0.7"/></filter>
<filter id="blA2" x="-20%" y="-20%" width="140%" height="140%"><feGaussianBlur stdDeviation="3"/></filter><filter id="nzA" x="0" y="0" width="100%" height="100%"><feTurbulence type="fractalNoise" baseFrequency="0.11" numOctaves="3" seed="7"/><feColorMatrix type="matrix" values="0 0 0 0 .05  0 0 0 0 .1  0 0 0 0 .03  1.900 0 0 0 -.7"/></filter><filter id="nzA2" x="0" y="0" width="100%" height="100%"><feTurbulence type="fractalNoise" baseFrequency="0.16" numOctaves="2" seed="21"/><feColorMatrix type="matrix" values="0 0 0 0 .85  0 0 0 0 .8  0 0 0 0 .6  0 1.800 0 0 -.85"/></filter>
<linearGradient id="skyA" x1="0" y1="0" x2="0" y2="1"><stop offset="0" stop-color="#efeeee"/><stop offset=".28" stop-color="#f3ecdc"/><stop offset=".55" stop-color="#f8dc90"/><stop offset=".82" stop-color="#f7b450"/><stop offset="1" stop-color="#ef8446"/></linearGradient>
<radialGradient id="sunA" cx="108" cy="33" r="30" gradientUnits="userSpaceOnUse"><stop offset="0" stop-color="#fffdf0"/><stop offset=".16" stop-color="#fff3b0"/><stop offset=".32" stop-color="#fdd060" stop-opacity=".95"/><stop offset=".65" stop-color="#f9a848" stop-opacity=".55"/><stop offset="1" stop-color="#f59a44" stop-opacity="0"/></radialGradient>
<linearGradient id="hazeA" x1="0" y1="0" x2="0" y2="1"><stop offset="0" stop-color="#b0507c"/><stop offset=".35" stop-color="#8c5488"/><stop offset="1" stop-color="#5c6850"/></linearGradient>
<radialGradient id="glowA" cx="110" cy="42" r="46" gradientUnits="userSpaceOnUse" gradientTransform="translate(0 21) scale(1 .5)"><stop offset="0" stop-color="#f4643a"/><stop offset=".5" stop-color="#e25a48" stop-opacity=".75"/><stop offset="1" stop-color="#c05070" stop-opacity="0"/></radialGradient>
</defs>
<g clip-path="url(#cpA)">
<rect width="200" height="42" fill="url(#skyA)"/>
<rect width="200" height="70" fill="url(#sunA)"/>
<rect y="40.500" width="200" height="40" fill="url(#hazeA)"/>
<rect y="40.500" width="200" height="40" fill="url(#glowA)"/>
<g filter="url(#blA)">
<rect y="72" width="200" height="128" fill="#33482a"/>
<path d="M0 56h40l30 10 40-4 40 6 50-6v30H0z" fill="#5a6a4c" opacity=".8"/>
<path d="M60 62c16-6 40-8 64-2l10 14-40 12-40-6z" fill="#8a8c44" opacity=".85"/>
<path d="M0 60c10-4 24-2 36 4l10 30-46 6z" fill="#345064"/>
<path d="M140 64c20-4 40-2 60 2v30l-50 4z" fill="#4c5a58"/>
<path d="M100 80c14-4 30-4 44 0l-6 12-34 2z" fill="#c4b4c8"/>
<path d="M60 84c10-4 24-4 34 0l4 14-36 2z" fill="#aab4d6" opacity=".8"/>
<path d="M128 92l14-2 6 12-16 4z" fill="#e88a8a"/>
<path d="M0 100c10 0 20 2 32 8 16 2 36-2 56-2l10 8c-18 2-32 8-46 14-14 6-34 10-52 20z" fill="#c9b6c8"/>
<path d="M0 102c12 2 22 8 30 14 8 10 4 20-8 28-8 4-14 6-22 8z" fill="#ddd0dc"/>
<path d="M36 118c10-6 22-8 30-4 6 6 2 14-8 20l-20 8z" fill="#3c5426"/>
<path d="M86 108c8-6 18-6 24 0 4 8-2 16-12 18-10 0-16-8-12-18z" fill="#7c9440"/>
<path d="M110 96c10-6 22-4 28 4 2 10-6 16-16 16s-16-10-12-20z" fill="#54702e"/>
<path d="M150 98c14-8 34-6 50 2v40c-20 4-38 0-50-10z" fill="#2c4428"/>
<path d="M0 140c10-8 26-12 42-8 14 4 22 12 30 22l-22 46H0z" fill="#223619"/>
<path d="M30 150c22-12 50-16 76-10l14 10-30 30-20 20H36z" fill="#8a6c68"/>
<path d="M44 166c10-8 24-8 32 0 4 10 0 22-12 28-12 2-22-6-24-16z" fill="#2e4a20"/>
<path d="M112 150c20-10 50-10 88-2v52h-96z" fill="#38602a"/>
<path d="M150 148c14-6 34-4 50 0v16c-16 2-34 0-50-6z" fill="#34542a"/>
<path d="M82 200l24-34c10-14 20-26 22-44l4-16 8 2-2 16c-2 20-10 32-20 46l-20 30z" fill="#93a0c6"/>
<path d="M108 156c8 4 20 4 30-2l4 12c-12 6-26 6-38 0z" fill="#7e8cb4" opacity=".7"/>
</g>
<rect y="46" width="200" height="154" filter="url(#nzA)" opacity=".75"/><rect y="46" width="200" height="154" filter="url(#nzA2)" opacity=".28"/><g fill="none" stroke="#3e72dc" stroke-width="1.500" stroke-linecap="round" filter="url(#blA)" opacity=".95">
<path d="M32 40v62M21 62v42M14 80v30M48 62v62M52 64l-4 60M64 76v56M68 78l-3 52M80 90v40"/>
<path d="M128 110l-13 46M132 110l6 44M146 114l-8 50M150 114l6 46M168 130v48M172 132l10 42M184 138v38M192 140l6 36"/>
<path d="M98 168l-14 26M102 170v28M116 174v24M120 172l-18 28M148 152l-2 46M152 152l8 40"/>
</g>
<g fill="none" stroke-linecap="round" filter="url(#blA)">
<path d="M138 42v42M124 44l-8 42M130 43l-4 43M147 44l5 40M124 43h23" stroke="#cf4058" stroke-width="1.500"/>
<path d="M163 27v58" stroke="#5a78c0" stroke-width="2"/><path d="M180 50v40M186 56v34" stroke="#e0b04c" stroke-width="1.300"/>
</g>
<g fill="none" stroke="#f4a25a" stroke-width="2.300" stroke-linecap="round" filter="url(#blA)">
<path d="M2 92c10-4 14-18 17-32 2-12 7-20 14-20 9 0 18 14 32 32 16 20 28 34 44 40 8 2 12-6 20-8 14-2 44 8 72 16"/>
<path d="M3 100c12 8 24 10 32-2 5-8 9-18 17-18 12 0 15 26 30 34 12 6 18-6 26-12 6-6 14-8 24-6"/>
<path d="M130 110c4 14 4 30 2 44-2 12-10 18-22 20"/>
<ellipse cx="104.500" cy="158" rx="18.500" ry="5.400"/><ellipse cx="180" cy="131" rx="17" ry="4.300"/>
<path d="M122 164c20 8 40 12 60 14"/>
</g>
<g fill="none" stroke="#c88a7c" stroke-width="1.200" opacity=".7" filter="url(#blA)"><path d="M4 104c6 14 10 30 14 46M14 106c8 10 14 22 18 36"/></g>
</g></svg>
<svg style="left:2592.9px;top:865.6px;" width="188" height="188" viewBox="0 0 200 200" >
<defs>
<clipPath id="cpB"><circle cx="100" cy="100" r="100"/></clipPath>
<filter id="blB" x="-5%" y="-5%" width="110%" height="110%"><feGaussianBlur stdDeviation="0.600"/></filter>
<filter id="blB2" x="-30%" y="-30%" width="160%" height="160%"><feGaussianBlur stdDeviation="3.500"/></filter><filter id="nzB" x="0" y="0" width="100%" height="100%"><feTurbulence type="fractalNoise" baseFrequency="0.22" numOctaves="2" seed="3"/><feColorMatrix type="matrix" values="1.700 0 0 0 -.34  1.500 0 0 0 -.32  1.300 0 0 0 -.3  0 0 0 0 1"/></filter><filter id="nzB2" x="0" y="0" width="100%" height="100%"><feTurbulence type="fractalNoise" baseFrequency="0.07" numOctaves="3" seed="11"/><feColorMatrix type="matrix" values="0 0 0 0 1  0 0 0 0 1  0 0 0 0 1  2.200 0 0 0 -.9"/></filter><clipPath id="cpCoin"><polygon points="63.700 35.300 90 26.800 119.400 32.200 141 45.400 158 76.300 160.400 102.600 148.800 130.500 122.500 145.200 85.300 142.100 55.900 125 39.700 94.100 43.500 57.700"/></clipPath>
<linearGradient id="skyB" x1="0" y1="0" x2="0" y2="1"><stop offset="0" stop-color="#244a90"/><stop offset=".4" stop-color="#2f5ca6"/><stop offset=".75" stop-color="#4677bc"/><stop offset="1" stop-color="#5f92d0"/></linearGradient>
<linearGradient id="coinB" x1=".9" y1="0" x2=".2" y2="1"><stop offset="0" stop-color="#a8b4d0"/><stop offset=".45" stop-color="#919dbb"/><stop offset="1" stop-color="#7f8bab"/></linearGradient>
<pattern id="stB" width="9" height="7" patternUnits="userSpaceOnUse"><rect width="9" height="7" fill="#7e6c5c"/><circle cx="2" cy="2" r="1.800" fill="#b8a898"/><circle cx="6.500" cy="1.500" r="1.400" fill="#5a4a3e"/><circle cx="4.500" cy="5" r="1.900" fill="#a08a76"/><circle cx="8" cy="5.500" r="1.300" fill="#d0c4b8"/><circle cx="1" cy="5.800" r="1.200" fill="#4c4038"/></pattern>
</defs>
<g clip-path="url(#cpB)">
<rect width="200" height="200" fill="url(#skyB)"/>
<g filter="url(#blB2)"><path d="M164 60c10-6 24-4 36 2v80c-12 4-24 2-34-6-6-20-6-50-2-76z" fill="#9ab4dc" opacity=".45"/>
<path d="M170 118c8-2 20-2 30 2v10c-10 2-22 2-30-2z" fill="#c4d4ec" opacity=".5"/></g>
<g filter="url(#blB)">
<path d="M16 151c4-4 10-4 14-6 4-4 10-4 14-8 6-2 10-6 16-6 6-2 10-4 14-2l2 10c-8 0-12 4-18 4-6 4-12 4-18 8-6 2-10 6-16 6-4 0-6-2-6-6z" fill="#e4e8f0"/>
<polygon points="63.700 35.300 43.500 57.700 39.700 94.100 55.900 125 85.300 142.100 122.500 145.200 123 148.600 84 146 52.500 128 36.500 96 40.500 56 61.500 33.500" fill="#4e535c"/>
<polygon points="63.700 35.300 90 26.800 119.400 32.200 141 45.400 158 76.300 160.400 102.600 148.800 130.500 122.500 145.200 85.300 142.100 55.900 125 39.700 94.100 43.500 57.700" fill="url(#coinB)"/>
<polygon points="63.700 35.300 90 26.800 119.400 32.200 141 45.400 158 76.300 160.400 102.600 148.800 130.500 122.500 145.200 85.300 142.100 55.900 125 39.700 94.100 43.500 57.700" fill="none" stroke="#dfe4f0" stroke-width="1.600" stroke-dasharray="1.300 1.300" transform="translate(4 3.400) scale(.96)"/>
<g clip-path="url(#cpCoin)"><rect x="36" y="24" width="130" height="126" filter="url(#nzB2)" opacity=".35"/></g><path d="M52.800 94.100L152.700 102.600" stroke="#69738c" stroke-width="1.700"/>
<path d="M102.300 28.500l.600 66" stroke="#ccd4e6" stroke-width="2.600"/><path d="M104.600 29l.600 66" stroke="#8a94ae" stroke-width="1"/>
<g fill="#79849e">
<path d="M62 48l8-8 3 2-7 9zM72 40l8-4 2 8-8 3zM84 37h7l1 9-7 1zM108 38l7 1-1 9-6-1zM118 42l7 3-3 8-6-2zM128 49l6 5-5 7-5-4z" opacity=".85"/>
<rect x="57" y="58" width="36" height="7.500"/><rect x="54" y="71" width="40" height="8"/>
<rect x="112" y="56" width="9" height="18"/><rect x="112" y="78" width="34" height="7"/>
<rect x="53" y="84" width="6" height="9"/><rect x="64" y="86" width="6" height="8"/><rect x="76" y="87" width="6" height="8"/><rect x="88" y="88" width="6" height="8"/>
<rect x="116" y="93" width="6" height="8"/><rect x="128" y="95" width="6" height="8"/><rect x="140" y="96" width="6" height="7"/>
</g>
<g fill="#c8d0e2" opacity=".8"><rect x="58" y="59" width="34" height="1.600"/><rect x="55" y="72" width="38" height="1.600"/><rect x="113" y="79" width="32" height="1.500"/></g>
<path d="M104 103l3.500 8 6.500-3.500-1.500 8.500 9-1-5.500 7 7.500 4.500-9.500 2.500.5 4-8-2-2 9.500-2.500-9.500-8 2 .5-4-9.500-2.500 7.500-4.500-5.500-7 9 1-1.500-8.500 6.500 3.500z" fill="#c6cfe2"/>
<path d="M66 110l4 6 5-2-1 6 6 1-5 4 3 4-6 0z M140 112l-3 6-5-2 1 6-6 1 4 4-2 5 7-1z" fill="#b4bed4" opacity=".7"/>
<path d="M66.500 148.500l8-3.500 62 2 3 4.500z" fill="#47484a"/>
<path d="M69.900 150.500h68.800v34.500H69.900z" fill="#8a7868"/><rect x="69.900" y="150.500" width="68.800" height="34.500" filter="url(#nzB)" opacity=".9"/>
<path d="M69.900 150.500h68.800v34.500H69.900z" fill="#6a5848" opacity=".15"/>
<path d="M69.900 150.500h5v34.500h-5z" fill="#3c3028" opacity=".35"/>
<path d="M56 184h90l6 8H50z" fill="#96989a"/>
<path d="M49 191.500h104l8 8.500H42z" fill="#6c6e70"/>
</g>
</g></svg>
<span class="t" style="top:1068.2px;font-size:25.5px;line-height:33px;color:#000000;left:1886.5px;width:1000px;text-align:center;font-weight:700;letter-spacing:-0.107px;-webkit-text-stroke:0;">Canada's</span>
<span class="t" style="top:1101.0px;font-size:25.5px;line-height:33px;color:#000000;left:1886.5px;width:1000px;text-align:center;font-weight:700;letter-spacing:-0.438px;-webkit-text-stroke:0;">Wonderland</span>
<span class="t" style="top:1068.2px;font-size:25.5px;line-height:33px;color:#000000;left:2187px;width:1000px;text-align:center;font-weight:700;letter-spacing:-0.403px;-webkit-text-stroke:0;">Sudbury Nickel</span>
<svg style="left:2371.6px;top:1155.7px;" width="29.4" height="30.3" viewBox="0 0 29.400 30.300" ><g fill="#000"><path d="M19.600.300c1.400-.200 2.600 1 2.300 2.600l-2.600 7.600c-.300 1 .300 1.800 1.300 1.800h6c2 0 3.200 1.400 3 3-.100.900-.500 1.500-1.100 1.900.700.600 1 1.400.900 2.300-.100 1-.600 1.700-1.300 2.100.500.600.700 1.300.600 2.100-.200 1.100-.900 1.800-1.700 2.100.300.500.400 1.100.300 1.700-.300 1.500-1.500 2.300-3 2.400-3.500.300-6.500.300-9 0C10.500 29.300 7.600 25.700 7.500 20.500c-.100-3.500 1.200-6.100 3-8.300 2.800-3.400 5.400-7.400 7.300-10.700.400-.700 1-1.100 1.800-1.200z"/><path d="M8 12.600C3.500 12.800.400 16.300.300 20.800c-.100 4.600 3.300 8.100 8.300 8.300C6.400 26.800 5.300 24 5.300 20.800c0-3.300 1-6 2.700-8.200z"/></g></svg>
<svg style="left:2673.2px;top:1155.7px;" width="27.8" height="29.9" viewBox="0 0 27.800 29.900" ><g fill="none" stroke="#000" stroke-width="2.200" stroke-linejoin="round" stroke-linecap="round"><path d="M4.200 2C6 1 12 .600 16 2.200c3.200 1.400 4.900 4.400 4.900 8 0 2.400-.900 4.400-2.400 6.400l-6.600 10.600c-.700 1.200-1.800 2-3 1.900-1.400-.200-2.200-1.500-1.900-3.200l2.800-8c.300-1-.200-1.600-1.200-1.600H3.600C1.900 18.300.800 17 1 15.500c.100-.700.400-1.200.900-1.500-.700-.500-1-1.300-.900-2.100.100-.800.500-1.400 1.200-1.700-.500-.500-.700-1.200-.600-1.900.100-.900.700-1.500 1.400-1.800-.400-.500-.500-1.100-.400-1.700.200-1.300.800-2.300 1.600-2.800z"/><path d="M16.500 2.400c1.600-.500 3.400-.900 5-.600 3.200.600 5.400 4 5.200 8.400-.200 4.200-2.600 7.200-5.600 7-.700 0-1.300-.200-1.800-.500"/></g></svg>
<div style="left:2083px;top:1756px;width:162.5px;height:52px;background:#383838;border-radius:12px;border:1px solid #515358;box-sizing:border-box;box-shadow:0 1px 6px rgba(0,0,0,.3);"></div>
<div style="left:2266px;top:1756px;width:62.5px;height:52px;background:#383838;border-radius:12px;border:1px solid #515358;box-sizing:border-box;box-shadow:0 1px 6px rgba(0,0,0,.3);"></div>
<div style="left:2349.5px;top:1756px;width:364.5px;height:52px;background:#383838;border-radius:12px;border:1px solid #515358;box-sizing:border-box;box-shadow:0 1px 6px rgba(0,0,0,.3);"></div>
<div style="left:2792.5px;top:1756px;width:207px;height:52px;background:#383838;border-radius:12px;border:1px solid #515358;box-sizing:border-box;box-shadow:0 1px 6px rgba(0,0,0,.3);"></div>
<svg style="left:2101px;top:1769px;" width="26" height="26" viewBox="0 0 26 26" ><circle cx="13" cy="13" r="13" fill="#3579f6"/><path d="M10.400 7.600c-.7-.4-1.500.1-1.500.9v9c0 .8.800 1.300 1.500.9l8-4.500c.7-.4.7-1.400 0-1.800z" fill="#383838"/></svg>
<svg style="left:2149px;top:1770px;" width="24" height="24" viewBox="0 0 24 24" ><rect x="1.400" y="1.400" width="21.200" height="21.200" rx="3.400" fill="none" stroke="#ececec" stroke-width="2.800"/><path d="M8.200 5v12.600l3.100-2.800 2.300 4.800 2-.900-2.300-4.700 4.300-.3z" fill="#ececec"/></svg>
<svg style="left:2202.8px;top:1771.8px;" width="23.6" height="20.4" viewBox="0 0 23.600 20.400" ><rect x="1.0" y="1.0" width="4.600" height="7" rx="1.300" fill="none" stroke="#ececec" stroke-width="2"/><rect x="1.0" y="12.4" width="4.600" height="7" rx="1.300" fill="none" stroke="#ececec" stroke-width="2"/><rect x="9.5" y="1.0" width="4.600" height="7" rx="1.300" fill="none" stroke="#ececec" stroke-width="2"/><rect x="9.5" y="12.4" width="4.600" height="7" rx="1.300" fill="none" stroke="#ececec" stroke-width="2"/><rect x="18.0" y="1.0" width="4.600" height="7" rx="1.300" fill="none" stroke="#ececec" stroke-width="2"/><rect x="18.0" y="12.4" width="4.600" height="7" rx="1.300" fill="none" stroke="#ececec" stroke-width="2"/></svg>
<svg style="left:2284.8px;top:1769.8px;" width="25" height="25.2" viewBox="0 0 25 25.200" ><rect x="1.300" y="1.300" width="22.400" height="9.600" rx="4.800" fill="none" stroke="#ececec" stroke-width="2.600"/><circle cx="6.200" cy="6.100" r="2.700" fill="#ececec"/><rect x="0" y="13.500" width="25" height="11.700" rx="5.850" fill="#ececec"/><circle cx="19" cy="19.300" r="3" fill="#383838"/></svg>
<svg style="left:2368.8px;top:1771px;" width="14.2" height="23" viewBox="0 0 16 24" ><rect x="1.100" y="1.100" width="13.800" height="21.800" rx="3" fill="#5e5e5e" stroke="#ececec" stroke-width="2"/><path d="M6 3.600h4M6 20.400h4" stroke="#ececec" stroke-width="1.300" stroke-linecap="round"/></svg>
<span class="t" style="top:1767.5px;font-size:22px;line-height:29px;color:#f0f0f0;left:2395.5px;letter-spacing:0.471px;">Automatic – iPhone 15 Pro</span>
<svg style="left:2681px;top:1777.5px;" width="15.5" height="9.3" viewBox="0 0 16 9.6" ><path d="M1.5 1.5L8 8l6.5-6.5" fill="none" stroke="#ececec" stroke-width="2.8" stroke-linecap="round" stroke-linejoin="round"/></svg>
<svg style="left:2811px;top:1769px;" width="26" height="26" viewBox="0 0 26 26" ><circle cx="10.500" cy="10.500" r="9" fill="none" stroke="#ececec" stroke-width="2.800"/><path d="M17.200 17.200l7 7" stroke="#ececec" stroke-width="3.200" stroke-linecap="round"/><path d="M6.500 10.500h8" stroke="#ececec" stroke-width="2.200" stroke-linecap="round"/></svg>
<svg style="left:2859px;top:1769px;" width="26" height="26" viewBox="0 0 26 26" ><circle cx="10.500" cy="10.500" r="9" fill="none" stroke="#ececec" stroke-width="2.800"/><path d="M17.200 17.200l7 7" stroke="#ececec" stroke-width="3.200" stroke-linecap="round"/><path d="M8.800 8l2.200-1.600v8.400" fill="none" stroke="#ececec" stroke-width="1.900" stroke-linecap="round" stroke-linejoin="round"/></svg>
<svg style="left:2907px;top:1769px;" width="26" height="26" viewBox="0 0 26 26" ><circle cx="10.500" cy="10.500" r="9" fill="none" stroke="#ececec" stroke-width="2.800"/><path d="M17.200 17.200l7 7" stroke="#ececec" stroke-width="3.200" stroke-linecap="round"/><rect x="7" y="7" width="7" height="7" rx="1.200" fill="none" stroke="#ececec" stroke-width="2"/></svg>
<svg style="left:2955px;top:1769px;" width="26" height="26" viewBox="0 0 26 26" ><circle cx="10.500" cy="10.500" r="9" fill="none" stroke="#ececec" stroke-width="2.800"/><path d="M17.200 17.200l7 7" stroke="#ececec" stroke-width="3.200" stroke-linecap="round"/><path d="M6.500 10.500h8M10.500 6.500v8" stroke="#ececec" stroke-width="2.200" stroke-linecap="round"/></svg>
<div style="left:546px;top:1832px;width:2478px;height:3px;background:#000000;"></div>
<div style="left:546px;top:1835px;width:2478px;height:53px;background:#1f1f1f;"></div>
<svg style="left:569px;top:1852px;" width="30" height="18.5" viewBox="0 0 30 18.500" ><path d="M3 0h18.500c1 0 1.900.5 2.500 1.200l5.300 6.300c.9 1 .9 2.500 0 3.500L24 17.300c-.6.700-1.500 1.200-2.500 1.200H3c-1.700 0-3-1.300-3-3V3c0-1.700 1.300-3 3-3z" fill="#3478f6"/></svg>
<div style="left:614px;top:1849.5px;width:2px;height:23px;background:#3a3a3a;"></div>
<div style="left:856px;top:1849.5px;width:2px;height:23px;background:#3a3a3a;"></div>
<div style="left:1098px;top:1849.5px;width:2px;height:23px;background:#3a3a3a;"></div>
<svg style="left:636.5px;top:1848.5px;" width="19" height="26" viewBox="0 0 19 26" ><rect x="1" y="1" width="5" height="24" rx="1.200" fill="none" stroke="#a8a8a8" stroke-width="1.800"/><rect x="13" y="1" width="5" height="24" rx="1.200" fill="none" stroke="#a8a8a8" stroke-width="1.800"/></svg>
<svg style="left:692px;top:1852px;" width="28" height="22" viewBox="0 0 28 22" ><g fill="none" stroke="#5e5e5e" stroke-width="1.900" stroke-linecap="round" stroke-linejoin="round"><path d="M1.500 13.500L13 2.500l11 11M24.500 7v6.500H18"/><rect x="6" y="17" width="14" height="4" stroke-linejoin="miter"/></g></svg>
<svg style="left:756px;top:1849px;" width="20" height="25" viewBox="0 0 20 25" ><g fill="none" stroke="#5e5e5e" stroke-width="1.900" stroke-linecap="round" stroke-linejoin="round"><path d="M10 1v15M3.500 10L10 16.500 16.500 10"/><rect x="1.500" y="20" width="17" height="4" stroke-linejoin="miter"/></g></svg>
<svg style="left:816.5px;top:1849px;" width="20" height="25" viewBox="0 0 20 25" ><g fill="none" stroke="#5e5e5e" stroke-width="1.900" stroke-linecap="round" stroke-linejoin="round"><path d="M10 16.500V1.500M3.500 8L10 1.500 16.500 8"/><rect x="1.500" y="20" width="17" height="4" stroke-linejoin="miter"/></g></svg>
<svg style="left:876.5px;top:1848px;" width="23" height="27" viewBox="0 0 23 27" ><g fill="none" stroke="#a8a8a8" stroke-width="1.800" stroke-linejoin="round"><path d="M9 6.500l12.500-4v17.500L9 25.500z"/><path d="M5 4.800l9-3M5 4.800v17M1.500 4l7-2.500M1.500 4v16"/></g></svg>
<svg style="left:934.5px;top:1848px;" width="27" height="27" viewBox="0 0 27 27" ><g fill="none" stroke="#a8a8a8" stroke-width="1.900"><circle cx="5.200" cy="5.200" r="3.800"/><circle cx="5.200" cy="21.500" r="3.800"/><circle cx="21.500" cy="13.400" r="3.800"/><path d="M8.600 7l9.600 4.800M8.600 19.800l9.600-4.800"/></g></svg>
<svg style="left:996.5px;top:1848.5px;" width="23" height="26" viewBox="0 0 23 26" ><rect x="1" y="1" width="21" height="10" rx="5" fill="none" stroke="#a8a8a8" stroke-width="1.900"/><circle cx="6.200" cy="6" r="2.600" fill="#a8a8a8"/><rect x="1" y="15" width="21" height="10" rx="5" fill="none" stroke="#a8a8a8" stroke-width="1.900"/><circle cx="16.800" cy="20" r="2.600" fill="#a8a8a8"/></svg>
<svg style="left:1055px;top:1848px;" width="27" height="27" viewBox="0 0 27 27" ><path d="M25.500 1.500L2 11.500h12.500l1 13z" fill="none" stroke="#a8a8a8" stroke-width="1.900" stroke-linejoin="round"/></svg>
<svg style="left:1118px;top:1848.5px;" width="23.5" height="23.5" viewBox="0 0 24 24" ><rect width="24" height="24" rx="5.500" fill="#8e8e8e"/><g fill="none" stroke="#2c2c2c" stroke-width="1.900" stroke-linecap="round"><path d="M13 5.800L7 16.200"/><path d="M10.600 5.600l6 10.600"/><path d="M5 14.500h8"/><path d="M16 14.500h3"/><path d="M6.200 17.600l-.5.900"/></g></svg>
<span class="t" style="top:1846.0px;font-size:22px;line-height:29px;color:#e2e2e2;left:1155px;letter-spacing:0.462px;">Landmarks</span>
<span class="t" style="top:1846.5px;font-size:22px;line-height:29px;color:#9c9c9c;left:2761px;font-weight:700;letter-spacing:0.17px;-webkit-text-stroke:.1px currentColor;">Line: 30</span>
<span class="t" style="top:1846.5px;font-size:22px;line-height:29px;color:#9c9c9c;left:2859.5px;font-weight:700;letter-spacing:0.306px;-webkit-text-stroke:.1px currentColor;">Col: 17</span>
<div style="left:2954.5px;top:1849.5px;width:2px;height:23px;background:#3a3a3a;"></div>
<svg style="left:2973px;top:1848px;" width="26" height="26" viewBox="0 0 26 26" ><rect x="1.100" y="1.100" width="23.800" height="23.800" rx="4.500" fill="none" stroke="#a8a8a8" stroke-width="2.200"/><rect x="4.500" y="15.500" width="17" height="6" rx="2" fill="#a8a8a8"/></svg>
<div style="left:544px;top:0;width:2px;height:1888px;background:#000"></div></div></body></html>
